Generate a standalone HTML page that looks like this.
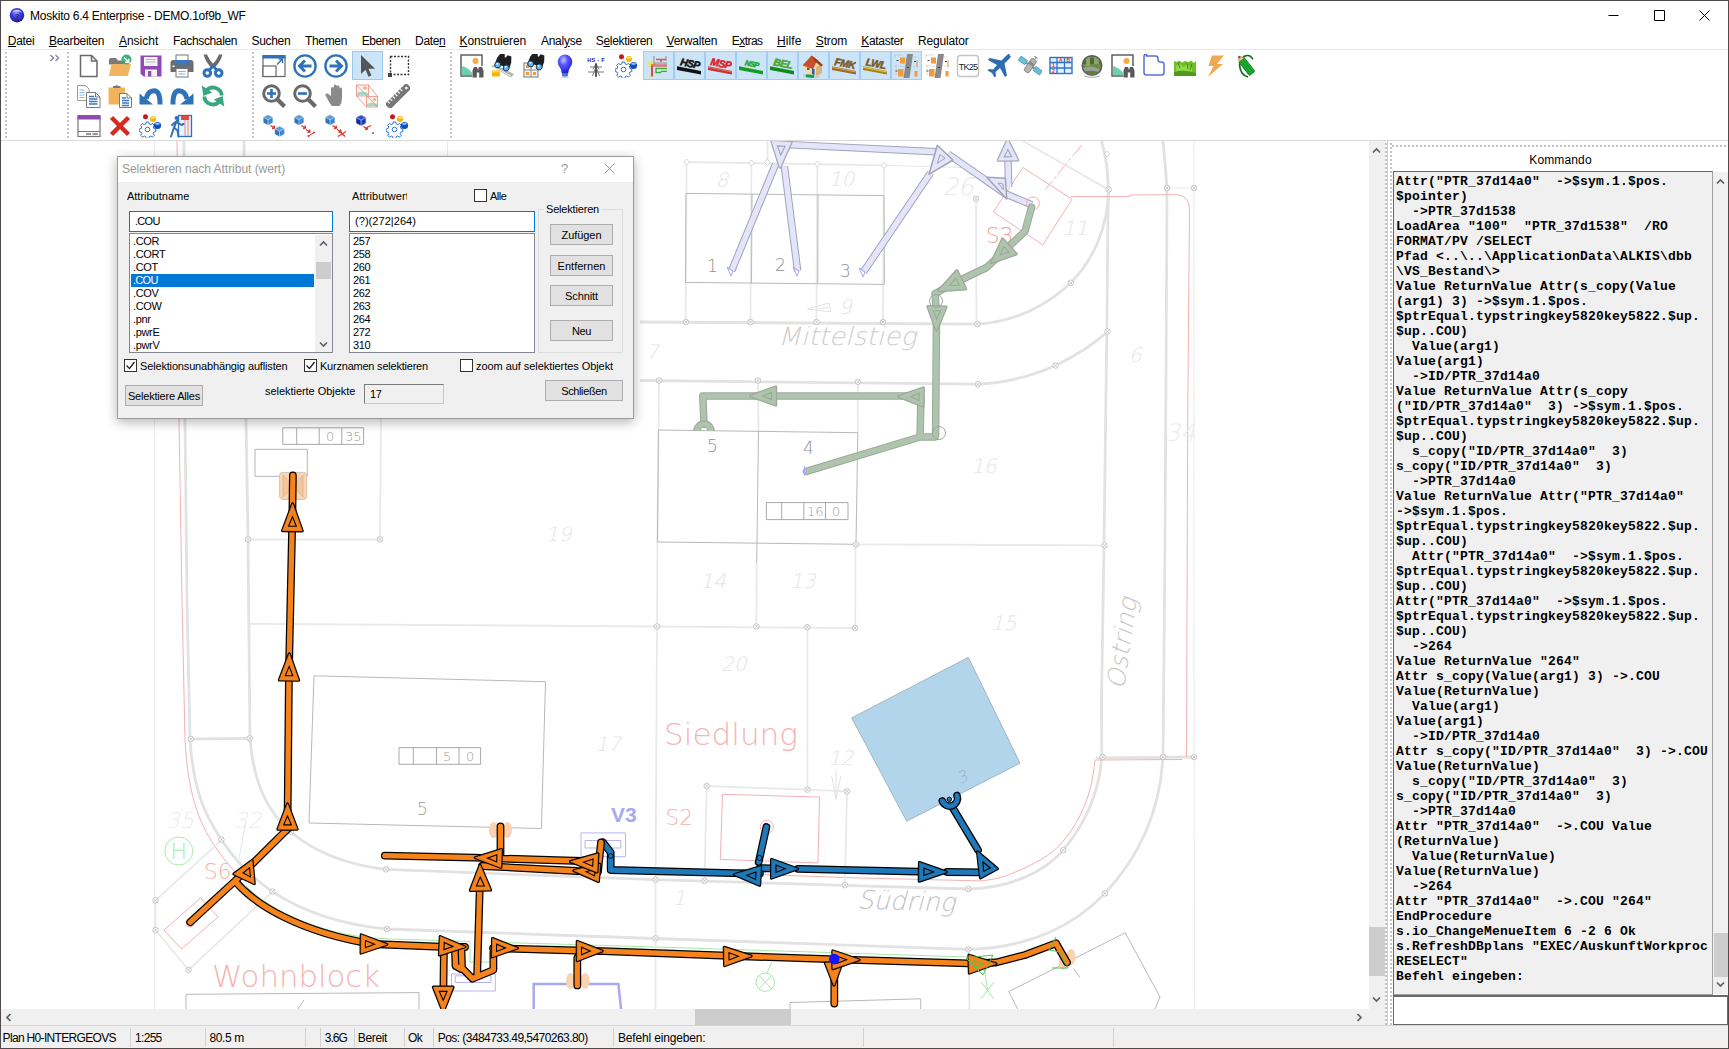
<!DOCTYPE html>
<html lang="de">
<head>
<meta charset="utf-8">
<title>Moskito 6.4 Enterprise - DEMO.1of9b_WF</title>
<style>
*{box-sizing:border-box;margin:0;padding:0}
html,body{width:1729px;height:1049px;overflow:hidden;background:#fff}
body{font-family:"Liberation Sans",sans-serif;font-size:12px;color:#000;position:relative}
.abs{position:absolute}
#frame{position:absolute;left:0;top:0;width:1729px;height:1049px;border:1px solid #504a4a;pointer-events:none;z-index:50}
#title{position:absolute;left:30px;top:9px;font-size:12px;line-height:14px;white-space:nowrap;letter-spacing:-0.24px}
#menubar{position:absolute;left:0;top:31px;width:1729px;height:20px;background:#fff}
#menubar span{position:absolute;top:3px;line-height:14px;font-size:12px;white-space:nowrap}
#menubar u{text-decoration:underline;text-underline-offset:1px}
#tbline{position:absolute;left:0;top:49px;width:1729px;height:1px;background:#e8e8e8}
#tbline2{position:absolute;left:0;top:140px;width:1729px;height:1px;background:#d9d9d9}
.grip{position:absolute;width:2px;top:52px;height:86px;background:repeating-linear-gradient(to bottom,#c6c6c6 0 2px,transparent 2px 4px)}
#map{position:absolute;left:1px;top:141px;width:1368px;height:868px;background:#fff;overflow:hidden}
#vscroll{position:absolute;left:1369px;top:141px;width:16px;height:868px;background:#f0f0f0}
#hscroll{position:absolute;left:1px;top:1009px;width:1368px;height:17px;background:#f0f0f0}
#corner{position:absolute;left:1369px;top:1009px;width:16px;height:17px;background:#f0f0f0}
.thumb{position:absolute;background:#cdcdcd}
#status{position:absolute;left:1px;top:1025px;width:1727px;height:23px;background:#f0f0f0;border-top:1px solid #d7d7d7}
#status span{position:absolute;top:5px;line-height:14px;white-space:nowrap;font-size:12px}
#status i{position:absolute;top:2px;width:1px;height:19px;background:#d2d2d2}
#cmd{position:absolute;left:1385px;top:141px;width:343px;height:884px;background:#fff}
#cmdtitle{position:absolute;left:1393px;top:153px;width:335px;text-align:center;font-size:12px;line-height:14px;letter-spacing:0.13px}
#cmdbox{position:absolute;left:1393px;top:171px;width:320px;height:824px;background:#f0f0f0;border:1px solid #696969;border-right-color:#a0a0a0;border-bottom-color:#a0a0a0;overflow:hidden}
#cmdbox pre{position:absolute;left:2px;top:2px;font-family:"Liberation Mono",monospace;font-weight:bold;font-size:13px;line-height:15px;letter-spacing:0.2px;color:#000;white-space:pre}
#cmdscroll{position:absolute;left:1713px;top:172px;width:15px;height:822px;background:#f0f0f0}
#cmdin{position:absolute;left:1393px;top:995px;width:335px;height:30px;background:#fff;border:1px solid #696969;border-top:2px solid #696969}

#dlg{position:absolute;left:117px;top:156px;width:517px;height:263px;background:#f0f0f0;border:1px solid #9b9b9b;box-shadow:0 3px 11px 0 rgba(0,0,0,.30);font-family:"Liberation Sans",sans-serif;font-size:11px;z-index:20}
#dlg .tb{position:absolute;left:0;top:0;width:515px;height:25px;background:#fff}
#dlg .tt{position:absolute;left:4px;top:5px;font-size:12px;line-height:14px;color:#999;white-space:nowrap}
#dlg .l{position:absolute;line-height:13px;white-space:nowrap;font-size:11px;letter-spacing:-.22px}
#dlg .in{position:absolute;background:#fff;border:1px solid #0078d7;height:21px}
#dlg .in span{position:absolute;left:5px;top:3px;line-height:13px}
#dlg .lb{position:absolute;background:#fff;border:1px solid #828790;overflow:hidden}
#dlg .lb div{position:absolute;left:3px;line-height:13px;height:13px;white-space:nowrap;letter-spacing:-.35px}
#dlg .btn{position:absolute;background:#e1e1e1;border:1px solid #adadad;text-align:center;line-height:20px;letter-spacing:-.3px;font-size:11px;white-space:nowrap}
#dlg .cb{position:absolute;width:13px;height:13px;background:#fff;border:1px solid #333}
#dlg .grp{position:absolute;border:1px solid #dcdcdc}
</style>
</head>
<body>
<svg class="abs" style="left:9px;top:7px" width="16" height="16" viewBox="0 0 16 16"><defs><radialGradient id="app" cx=".45" cy=".35" r=".7"><stop offset="0" stop-color="#9a9aff"/><stop offset=".45" stop-color="#3c3ce0"/><stop offset="1" stop-color="#121290"/></radialGradient></defs><circle cx="8" cy="8.200" r="7.200" fill="url(#app)"/><path d="M2.500 5.500q5.500-5.500 11 0q-5.500-2.200-11 0z" fill="#e4e4ff" opacity=".85"/><text x="8" y="11.500" font-family="Liberation Sans,sans-serif" font-size="7.500" font-weight="bold" fill="#1c1c60" text-anchor="middle">?</text></svg>
<svg class="abs" style="left:1601px;top:1px" width="127" height="30" viewBox="0 0 127 30"><path d="M7.500 14.500h10M53.500 9.500h10v10h-10zM98.500 9.500l10 10M108.500 9.500l-10 10" fill="none" stroke="#000" stroke-width="1"/></svg>
<div id="title">Moskito 6.4 Enterprise - DEMO.1of9b_WF</div>
<div id="menubar">
<span style="left:7.8px;letter-spacing:-0.32px"><u>D</u>atei</span>
<span style="left:48.9px;letter-spacing:-0.27px"><u>B</u>earbeiten</span>
<span style="left:118.9px;letter-spacing:0.01px"><u>A</u>nsicht</span>
<span style="left:173.0px;letter-spacing:-0.36px">Fachschalen</span>
<span style="left:251.5px;letter-spacing:-0.33px">Suchen</span>
<span style="left:304.9px;letter-spacing:-0.31px">Themen</span>
<span style="left:361.8px;letter-spacing:-0.51px">Ebenen</span>
<span style="left:415.1px;letter-spacing:-0.35px">Date<u>n</u></span>
<span style="left:459.6px;letter-spacing:-0.13px"><u>K</u>onstruieren</span>
<span style="left:540.9px;letter-spacing:-0.24px">Anal<u>y</u>se</span>
<span style="left:595.7px;letter-spacing:-0.30px">S<u>e</u>lektieren</span>
<span style="left:666.5px;letter-spacing:-0.23px"><u>V</u>erwalten</span>
<span style="left:731.8px;letter-spacing:-0.55px">E<u>x</u>tras</span>
<span style="left:776.9px;letter-spacing:0.10px"><u>H</u>ilfe</span>
<span style="left:815.8px;letter-spacing:-0.14px"><u>S</u>trom</span>
<span style="left:861.2px;letter-spacing:-0.30px"><u>K</u>ataster</span>
<span style="left:917.9px;letter-spacing:-0.16px">Regulator</span>
</div>
<div id="tbline"></div>
<div id="tbline2"></div>
<div class="grip" style="left:5px"></div>
<div class="grip" style="left:67px"></div>
<div class="grip" style="left:252px"></div>
<div class="grip" style="left:450px"></div>
<!--TB_BEGIN-->
<svg class="abs" style="left:49px;top:53px" width="12" height="10" viewBox="0 0 12 10"><path d="M1.5 2l3 3-3 3M6.5 2l3 3-3 3" fill="none" stroke="#7a7aa8" stroke-width="1.2"/></svg>
<svg class="abs" style="left:77px;top:54px" width="24" height="24" viewBox="0 0 24 24"><path d="M3.500 1.500h11l5.500 5.500v15.500h-16.500z" fill="#fff" stroke="#6a6a6a" stroke-width="1.500"/><path d="M14.500 1.500v5.500h5.500" fill="none" stroke="#6a6a6a" stroke-width="1.500"/></svg>
<svg class="abs" style="left:108px;top:54px" width="24" height="24" viewBox="0 0 24 24"><path d="M1 6q0-2 2-2h5l2 2.5h7v4H1z" fill="#7a7a7a"/><path d="M3.5 10h19.5l-3.2 12H1z" fill="#f0b35e"/><circle cx="18.5" cy="5.5" r="5" fill="#3db07c"/><path d="M16 3.5l4.5 4.5M20.7 4.8v3.4h-3.4" stroke="#fff" stroke-width="1.5" fill="none"/></svg>
<svg class="abs" style="left:139px;top:54px" width="24" height="24" viewBox="0 0 24 24"><path d="M1.500 1.500h21v21h-18l-3-3z" fill="#8f4bb3"/><rect x="5" y="3" width="13.5" height="9" fill="#f3f3f3"/><path d="M7 5.5h9.5M7 8h9.5" stroke="#b9b9b9" stroke-width="1.2"/><rect x="6" y="15.5" width="12" height="7" fill="#f3f3f3"/><rect x="9" y="17" width="3.3" height="5.5" fill="#8f4bb3"/></svg>
<svg class="abs" style="left:170px;top:54px" width="24" height="24" viewBox="0 0 24 24"><rect x="6" y="1" width="12" height="6" fill="#fff" stroke="#777" stroke-width="1"/><path d="M0.5 9q0-3 3-3h17q3 0 3 3v9h-23z" fill="#6d6d6d"/><path d="M4.5 6h15v4.5h-15z" fill="#3b78bd"/><rect x="2.5" y="11.5" width="2" height="1.6" fill="#fff"/><rect x="6" y="14.5" width="12" height="8.5" fill="#fff" stroke="#777" stroke-width="1"/><path d="M8.5 17.5h7M8.5 20h7" stroke="#7fb0e0" stroke-width="1.2"/></svg>
<svg class="abs" style="left:201px;top:54px" width="24" height="24" viewBox="0 0 24 24"><path d="M2.500 0.500q2.500 8.500 8.300 13.500l2.700-2.600q-5-4.500-7.500-10.900z" fill="#6b6b6b"/><path d="M21.500 0.500q-2.500 8.500-8.300 13.500l-2.700-2.600q5-4.500 7.500-10.900z" fill="#6b6b6b"/><circle cx="6.300" cy="19" r="3.300" fill="none" stroke="#2f72b8" stroke-width="3"/><circle cx="17.700" cy="19" r="3.300" fill="none" stroke="#2f72b8" stroke-width="3"/><path d="M8 16.300l4-4.300 4 4.300" fill="none" stroke="#2f72b8" stroke-width="2.800"/></svg>
<svg class="abs" style="left:77px;top:84px" width="24" height="24" viewBox="0 0 24 24"><path d="M0.500 1.500h8l3.500 3.500v11.500h-11.500z" fill="#fff" stroke="#9a9a9a" stroke-width="1"/><path d="M2.500 6h5M2.500 8.500h5M2.500 11h5M2.500 13.500h5" stroke="#8db4dd" stroke-width="1.100"/><path d="M9.500 8.500h9l4.500 4.500v10.500h-13.500z" fill="#fff" stroke="#7a7a7a" stroke-width="1"/><path d="M18.500 8.500v4.500h4.500" fill="none" stroke="#7a7a7a"/><path d="M12 12.500h5M12 15h8.500M12 17.500h8.500M12 20h8.500" stroke="#3b78bd" stroke-width="1.300"/></svg>
<svg class="abs" style="left:108px;top:84px" width="24" height="24" viewBox="0 0 24 24"><path d="M0.500 3.500h16.500v17h-16.500z" fill="#f0b35e"/><path d="M5 4v-2h2.500q1.200-2 2.500 0h2.500v2z" fill="#777"/><path d="M11.500 9.500h7.500l4.500 4.500v9.500h-12z" fill="#fff" stroke="#7a7a7a" stroke-width="1"/><path d="M19 9.500v4.500h4.500" fill="none" stroke="#7a7a7a"/><path d="M14 14h4M14 16.500h7M14 19h7M14 21.500h7" stroke="#3b78bd" stroke-width="1.300"/></svg>
<svg class="abs" style="left:139px;top:84px" width="24" height="24" viewBox="0 0 24 24"><path d="M0.500 9.500v11h13.500z" fill="#2f72b8"/><path d="M7 15q2-8.300 8-8.300q6.300 0 6 13.800" fill="none" stroke="#2f72b8" stroke-width="5"/></svg>
<svg class="abs" style="left:170px;top:84px" width="24" height="24" viewBox="0 0 24 24"><path d="M23.500 9.500v11h-13.500z" fill="#2f72b8"/><path d="M17 15q-2-8.300-8-8.300q-6.300 0-6 13.800" fill="none" stroke="#2f72b8" stroke-width="5"/></svg>
<svg class="abs" style="left:201px;top:84px" width="24" height="24" viewBox="0 0 24 24"><path d="M20.800 11.500a8.800 8.800 0 0 0-15.300-5" fill="none" stroke="#3aa681" stroke-width="3.800"/><path d="M0.800 1.500l1.500 10.500 9-3.500z" fill="#3aa681"/><path d="M3.200 12.500a8.800 8.800 0 0 0 15.300 5" fill="none" stroke="#3aa681" stroke-width="3.800"/><path d="M23.200 22.500l-1.500-10.500-9 3.500z" fill="#3aa681"/></svg>
<svg class="abs" style="left:77px;top:114px" width="24" height="24" viewBox="0 0 24 24"><rect x="1" y="2.500" width="22" height="20" fill="#fff" stroke="#777" stroke-width="1.200"/><rect x="0.500" y="1" width="23" height="4.500" fill="#8f4bb3"/><path d="M1 17.500h22" stroke="#777" stroke-width="1"/><rect x="9" y="19" width="5" height="2" fill="#999"/><rect x="15.500" y="19" width="5.500" height="2" fill="#999"/></svg>
<svg class="abs" style="left:108px;top:114px" width="24" height="24" viewBox="0 0 24 24"><path d="M3.500 3.500l17 17M20.500 3.500l-17 17" stroke="#d52b1e" stroke-width="4.500"/></svg>
<svg class="abs" style="left:139px;top:114px" width="24" height="24" viewBox="0 0 24 24"><g transform="translate(8.5 15.5)"><path d="M-1.300-7.500h2.600l.4 1.900 1.600.7 1.700-1.100 1.800 1.800-1.100 1.700.7 1.600 1.900.4v2.600l-1.900.4-.7 1.600 1.100 1.700-1.800 1.800-1.700-1.100-1.600.7-.4 1.900h-2.600l-.4-1.900-1.600-.7-1.700 1.100-1.800-1.800 1.100-1.700-.7-1.600-1.900-.4v-2.600l1.900-.4.7-1.600-1.100-1.700 1.800-1.800 1.700 1.100 1.600-.7z" fill="#fff" stroke="#2f72c8" stroke-width="1"/><circle r="2.300" fill="#fff" stroke="#2f72c8" stroke-width="1"/></g><circle cx="6.500" cy="2.800" r="2.500" fill="#c8161d"/><circle cx="14" cy="5" r="3" fill="#f5b400"/><ellipse cx="14" cy="3.800" rx="2" ry="1" fill="#fde9a0"/><circle cx="18.500" cy="11.500" r="3.600" fill="#0b4fc0"/><ellipse cx="18.500" cy="9.800" rx="2.400" ry="1.100" fill="#9cc0f5"/></svg>
<svg class="abs" style="left:170px;top:114px" width="24" height="24" viewBox="0 0 24 24"><rect x="8.500" y="1.500" width="13" height="21" fill="#eaf2fb" stroke="#2f72b8" stroke-width="1.300"/><rect x="11" y="2" width="8" height="4" fill="#e04a3f"/><path d="M15 6v16M18 6v16" stroke="#e58a84" stroke-width="1"/><circle cx="6.500" cy="4" r="2" fill="#2f72b8"/><path d="M7 6.500l-3 7 3.500 3 1 6M4 13.500l-3 9M6.500 8l5 3 2-1M5.500 8l-3.500 3" stroke="#2f72b8" stroke-width="2" fill="none" stroke-linecap="round" stroke-linejoin="round"/></svg>
<svg class="abs" style="left:262px;top:54px" width="24" height="24" viewBox="0 0 24 24"><rect x="1" y="2" width="22" height="20.500" fill="#fff" stroke="#666" stroke-width="1.200"/><rect x="0.500" y="1" width="23" height="3.500" fill="#2f72b8"/><rect x="1" y="12" width="13" height="10.500" fill="#fff" stroke="#666" stroke-width="1.200"/><path d="M15 10.500l5.500-5.500M16.500 5h4v4" stroke="#2f72b8" stroke-width="1.400" fill="none"/></svg>
<svg class="abs" style="left:293px;top:54px" width="24" height="24" viewBox="0 0 24 24"><circle cx="12" cy="12" r="10.600" fill="#fff" stroke="#2f72b8" stroke-width="2.400"/><path d="M18.500 12h-11M12 6.500l-5.500 5.500 5.500 5.500" stroke="#2f72b8" stroke-width="3" fill="none"/></svg>
<svg class="abs" style="left:324px;top:54px" width="24" height="24" viewBox="0 0 24 24"><circle cx="12" cy="12" r="10.600" fill="#fff" stroke="#2f72b8" stroke-width="2.400"/><path d="M5.500 12h11M12 6.500l5.500 5.500-5.500 5.500" stroke="#2f72b8" stroke-width="3" fill="none"/></svg>
<div class="abs" style="left:352px;top:51px;width:31px;height:29px;background:#cce4f7;border:1px solid #99c9ef"></div>
<svg class="abs" style="left:355px;top:54px" width="24" height="24" viewBox="0 0 24 24"><path d="M6 1v19l4.500-4.300 3 7 3-1.300-3-6.700h6.500z" fill="#555"/></svg>
<svg class="abs" style="left:386px;top:54px" width="24" height="24" viewBox="0 0 24 24"><rect x="4.500" y="2.500" width="18" height="18" fill="none" stroke="#333" stroke-width="1.400" stroke-dasharray="2 1.500"/><rect x="2" y="19" width="4" height="4" fill="#444"/></svg>
<svg class="abs" style="left:262px;top:84px" width="24" height="24" viewBox="0 0 24 24"><circle cx="9.500" cy="9.500" r="7.800" fill="#fff" stroke="#6a6a6a" stroke-width="3"/><path d="M15.500 15.500l7 7" stroke="#6a6a6a" stroke-width="4.200"/><path d="M5 9.500h9M9.500 5v9" stroke="#2f72b8" stroke-width="2.600"/></svg>
<svg class="abs" style="left:293px;top:84px" width="24" height="24" viewBox="0 0 24 24"><circle cx="9.500" cy="9.500" r="7.800" fill="#fff" stroke="#6a6a6a" stroke-width="3"/><path d="M15.500 15.500l7 7" stroke="#6a6a6a" stroke-width="4.200"/><path d="M5 9.500h9" stroke="#2f72b8" stroke-width="2.600"/></svg>
<svg class="abs" style="left:324px;top:84px" width="24" height="24" viewBox="0 0 24 24"><path d="M7 12v-7.500q0-1.500 1.400-1.500t1.400 1.500v-2.500q0-1.500 1.400-1.500t1.400 1.500v.8q0-1.500 1.400-1.500t1.400 1.500v2q0-1.400 1.300-1.400t1.300 1.400v9.700q0 4.500-2.500 7.500h-7.500q-2-2-4-6l-2.500-4.500q-.5-1.500 1-2t2.500 1z" fill="#8a8a8a"/></svg>
<svg class="abs" style="left:355px;top:84px" width="24" height="24" viewBox="0 0 24 24"><rect x="1.500" y="1" width="12" height="11" fill="#fdf1ee" stroke="#e9a39b" stroke-width="1"/><circle cx="10" cy="4" r="1.800" fill="#f3b27a"/><path d="M2 9q5-3 11 0v2.500h-11z" fill="#a9d9c2"/><rect x="11.500" y="12.500" width="11" height="10.500" fill="#fdf1ee" stroke="#e9a39b" stroke-width="1"/><circle cx="19.500" cy="15.500" r="1.600" fill="#f3b27a"/><path d="M12 20q5-3 10 0v2.500h-10z" fill="#a9d9c2"/><path d="M1.500 1l21 22M13.500 1l9 11.500M1.500 12l10 11" stroke="#e58d83" stroke-width=".8" fill="none"/></svg>
<svg class="abs" style="left:386px;top:84px" width="24" height="24" viewBox="0 0 24 24"><g transform="rotate(-45 12 12)"><rect x="-3" y="8.500" width="30" height="7.500" rx="1.500" fill="#777"/><path d="M1 8.500v3M4.500 8.500v3M8 8.500v3M11.500 8.500v3M15 8.500v3M18.500 8.500v3" stroke="#fff" stroke-width="1.200"/><circle cx="23.500" cy="12.200" r="1.300" fill="#fff"/></g></svg>
<svg class="abs" style="left:262px;top:114px" width="24" height="24" viewBox="0 0 24 24"><g transform="translate(6 6) scale(1.05)"><path d="M0-5l4.600 2.300v5.200l-4.600 2.500-4.600-2.500v-5.200z" fill="#2f72b8"/><path d="M0-5l4.600 2.300-4.600 2.400-4.600-2.400z" fill="#5a9bd8"/><path d="M0-.3v5.300l4.600-2.500v-5.200z" fill="#3f86cc"/><path d="M0-5l4.600 2.300v5.200l-4.600 2.500-4.600-2.500v-5.200zM-4.600-2.700l4.600 2.400 4.600-2.400M0-.3v5.300" fill="none" stroke="#fff" stroke-width=".5"/></g><g transform="translate(17.5 17.5) scale(1.05)"><path d="M0-5l4.600 2.300v5.200l-4.600 2.500-4.600-2.500v-5.200z" fill="#2f72b8"/><path d="M0-5l4.600 2.300-4.600 2.400-4.600-2.400z" fill="#5a9bd8"/><path d="M0-.3v5.300l4.600-2.500v-5.200z" fill="#3f86cc"/><path d="M0-5l4.600 2.300v5.200l-4.600 2.500-4.600-2.500v-5.200zM-4.600-2.700l4.600 2.400 4.600-2.400M0-.3v5.300" fill="none" stroke="#fff" stroke-width=".5"/></g><path d="M8.500 11.500l4 2.500M10 14.500l2.500-.5-.3-2.500" stroke="#d9362b" stroke-width="1.300" fill="none"/></svg>
<svg class="abs" style="left:293px;top:114px" width="24" height="24" viewBox="0 0 24 24"><g transform="translate(6 6) scale(1.05)"><path d="M0-5l4.600 2.300v5.200l-4.600 2.500-4.600-2.500v-5.200z" fill="#2f72b8"/><path d="M0-5l4.600 2.300-4.600 2.400-4.600-2.400z" fill="#5a9bd8"/><path d="M0-.3v5.300l4.600-2.500v-5.200z" fill="#3f86cc"/><path d="M0-5l4.600 2.300v5.200l-4.600 2.500-4.600-2.500v-5.200zM-4.600-2.700l4.600 2.400 4.600-2.400M0-.3v5.300" fill="none" stroke="#fff" stroke-width=".5"/></g><path d="M8.500 11.500l4 2.500M10 14.500l2.500-.5-.3-2.500M13 15.500l4 2.500M14.500 18.500l2.500-.5-.3-2.500" stroke="#d9362b" stroke-width="1.300" fill="none"/><path d="M15.500 22l5.500-3.500" stroke="#d9362b" stroke-width="1"/><circle cx="15.500" cy="22" r="1" fill="#d9362b"/><circle cx="21" cy="18.500" r="1" fill="#d9362b"/></svg>
<svg class="abs" style="left:324px;top:114px" width="24" height="24" viewBox="0 0 24 24"><g transform="translate(6 6) scale(1.05)"><path d="M0-5l4.600 2.300v5.200l-4.600 2.500-4.600-2.500v-5.200z" fill="#2f72b8"/><path d="M0-5l4.600 2.300-4.600 2.400-4.600-2.400z" fill="#5a9bd8"/><path d="M0-.3v5.300l4.600-2.500v-5.200z" fill="#3f86cc"/><path d="M0-5l4.600 2.300v5.200l-4.600 2.500-4.600-2.500v-5.200zM-4.600-2.700l4.600 2.400 4.600-2.400M0-.3v5.300" fill="none" stroke="#fff" stroke-width=".5"/></g><path d="M8.500 11.500l4 2.500M10 14.500l2.500-.5-.3-2.500M13 15.500l4 2.500M14.500 18.500l2.500-.5-.3-2.500" stroke="#d9362b" stroke-width="1.300" fill="none"/><path d="M14 22.500l8-5M16 17.500l5 5" stroke="#d9362b" stroke-width="1.200"/></svg>
<svg class="abs" style="left:355px;top:114px" width="24" height="24" viewBox="0 0 24 24"><g transform="translate(6 6.5) scale(1.1)"><path d="M0-5l4.600 2.300v5.200l-4.600 2.500-4.600-2.500v-5.200z" fill="#0d2a9c"/><path d="M0-5l4.600 2.300-4.600 2.400-4.600-2.400z" fill="#2a4fd0"/><path d="M0-.3v5.300l4.600-2.500v-5.200z" fill="#1a3cc0"/><path d="M0-5l4.600 2.300v5.200l-4.600 2.500-4.600-2.500v-5.200zM-4.600-2.700l4.600 2.400 4.600-2.400M0-.3v5.300" fill="none" stroke="#fff" stroke-width=".5"/></g><path d="M8.500 12.500l4 2.500M10 15.500l2.500-.5-.3-2.500M13 13l3-1.500" stroke="#d9362b" stroke-width="1.300" fill="none"/><circle cx="18" cy="19" r=".9" fill="#555"/></svg>
<svg class="abs" style="left:386px;top:114px" width="24" height="24" viewBox="0 0 24 24"><g transform="translate(8.5 15.5)"><path d="M-1.300-7.500h2.600l.4 1.900 1.600.7 1.700-1.100 1.800 1.800-1.100 1.700.7 1.600 1.900.4v2.600l-1.900.4-.7 1.600 1.100 1.700-1.800 1.800-1.700-1.100-1.600.7-.4 1.900h-2.600l-.4-1.900-1.600-.7-1.700 1.100-1.800-1.800 1.100-1.700-.7-1.600-1.900-.4v-2.600l1.900-.4.7-1.600-1.100-1.700 1.800-1.800 1.700 1.100 1.600-.7z" fill="#fff" stroke="#2f72c8" stroke-width="1"/><circle r="2.300" fill="#fff" stroke="#2f72c8" stroke-width="1"/></g><circle cx="6.500" cy="2.800" r="2.500" fill="#c8161d"/><circle cx="14" cy="5" r="3" fill="#f5b400"/><ellipse cx="14" cy="3.800" rx="2" ry="1" fill="#fde9a0"/><circle cx="18.500" cy="11.500" r="3.600" fill="#0b4fc0"/><ellipse cx="18.500" cy="9.800" rx="2.400" ry="1.100" fill="#9cc0f5"/></svg>
<div class="abs" style="left:643px;top:51px;width:31px;height:29px;background:#cce4f7;border:1px solid #a3cdf0"></div>
<div class="abs" style="left:674px;top:51px;width:31px;height:29px;background:#cce4f7;border:1px solid #a3cdf0"></div>
<div class="abs" style="left:705px;top:51px;width:31px;height:29px;background:#cce4f7;border:1px solid #a3cdf0"></div>
<div class="abs" style="left:736px;top:51px;width:31px;height:29px;background:#cce4f7;border:1px solid #a3cdf0"></div>
<div class="abs" style="left:767px;top:51px;width:31px;height:29px;background:#cce4f7;border:1px solid #a3cdf0"></div>
<div class="abs" style="left:798px;top:51px;width:31px;height:29px;background:#cce4f7;border:1px solid #a3cdf0"></div>
<div class="abs" style="left:829px;top:51px;width:31px;height:29px;background:#cce4f7;border:1px solid #a3cdf0"></div>
<div class="abs" style="left:860px;top:51px;width:31px;height:29px;background:#cce4f7;border:1px solid #a3cdf0"></div>
<div class="abs" style="left:891px;top:51px;width:31px;height:29px;background:#cce4f7;border:1px solid #a3cdf0"></div>
<svg class="abs" style="left:460px;top:54px" width="24" height="24" viewBox="0 0 24 24"><rect x="1" y="1" width="21" height="21" fill="#fff" stroke="#555" stroke-width="1.400"/><circle cx="15.500" cy="7" r="3" fill="#f6ad3c"/><path d="M2 12q6 1 12 9h-12z" fill="#6fd0b0"/><rect x="12" y="12" width="12" height="12" fill="#fff"/><g transform="translate(12.5 13)"><path d="M0 3.500l1.500-3.500h3l.8 2.500h.4l.8-2.500h3l1.500 3.500v7h-4.300v-5h-2.400v5h-4.300z" fill="#5a5a5a"/></g></svg>
<svg class="abs" style="left:491px;top:54px" width="24" height="24" viewBox="0 0 24 24"><path d="M0 12l4-1.500 19 9.500-3 3.500z" fill="#b5b5b5"/><path d="M3 13l17 9" stroke="#e6e6e6" stroke-width="1"/><path d="M1 16.500h8v6h-8z" fill="#f9b300"/><path d="M1 16.500h8v2h-8z" fill="#ffd54a"/><g transform="translate(12 8) rotate(20)"><path d="M-7-2l2-6h4l1 3h1l1-3h4l2 6v6h-15z" fill="#1f1f1f"/><circle cx="-4" cy="4.500" r="3" fill="#57b7ee" stroke="#123" stroke-width=".8"/><circle cx="5" cy="4.500" r="3" fill="#57b7ee" stroke="#123" stroke-width=".8"/><circle cx="-4.800" cy="3.700" r="1" fill="#d6f0ff"/><circle cx="4.200" cy="3.700" r="1" fill="#d6f0ff"/></g></svg>
<svg class="abs" style="left:522px;top:54px" width="24" height="24" viewBox="0 0 24 24"><rect x="2" y="9" width="14" height="14" fill="#f4f4f4" stroke="#8a8a8a" stroke-width="1.200"/><path d="M9 9v14M2 16h14" stroke="#8a8a8a" stroke-width="1"/><rect x="4" y="11" width="3" height="3" fill="#f59a3c"/><rect x="4" y="18" width="3" height="3" fill="#f59a3c"/><rect x="11" y="18" width="3" height="3" fill="#f59a3c"/><g transform="translate(14 7) rotate(20)"><path d="M-7-2l2-6h4l1 3h1l1-3h4l2 6v6h-15z" fill="#1f1f1f"/><circle cx="-4" cy="4.500" r="3" fill="#57b7ee" stroke="#123" stroke-width=".8"/><circle cx="5" cy="4.500" r="3" fill="#57b7ee" stroke="#123" stroke-width=".8"/><circle cx="-4.800" cy="3.700" r="1" fill="#d6f0ff"/><circle cx="4.200" cy="3.700" r="1" fill="#d6f0ff"/></g></svg>
<svg class="abs" style="left:553px;top:54px" width="24" height="24" viewBox="0 0 24 24"><defs><radialGradient id="bulb" cx=".4" cy=".3" r=".8"><stop offset="0" stop-color="#c8c8ff"/><stop offset=".35" stop-color="#5858ff"/><stop offset="1" stop-color="#1212c8"/></radialGradient></defs><path d="M12 0.500a7.300 7.300 0 0 1 7.300 7.300q0 3-2.500 6.200-1.300 2-1.500 5h-6.600q-.2-3-1.500-5-2.500-3.200-2.500-6.200a7.300 7.300 0 0 1 7.300-7.300z" fill="url(#bulb)"/><path d="M9 19h6v2.500q-3 3-6 0z" fill="#3a7be0"/><ellipse cx="12" cy="23" rx="4" ry=".8" fill="#bbb"/></svg>
<svg class="abs" style="left:584px;top:54px" width="24" height="24" viewBox="0 0 24 24"><text x="12" y="7.500" font-family="Liberation Sans,sans-serif" font-weight="bold" font-size="5.500" fill="#1a1ab0" text-anchor="middle" letter-spacing=".3">HS - F</text><path d="M12 9.500v13.500M6 13h12M4 18h16M9 15.500l3-6 3 6M8.500 22l3.500-9 3.500 9" stroke="#7a7a7a" stroke-width="1" fill="none"/><path d="M12 9.500v13.500" stroke="#444" stroke-width="1.600"/></svg>
<svg class="abs" style="left:615px;top:54px" width="24" height="24" viewBox="0 0 24 24"><g transform="translate(8.5 15.5)"><path d="M-1.300-7.500h2.600l.4 1.900 1.600.7 1.700-1.100 1.800 1.800-1.100 1.700.7 1.600 1.900.4v2.600l-1.900.4-.7 1.600 1.100 1.700-1.800 1.800-1.700-1.100-1.600.7-.4 1.900h-2.600l-.4-1.900-1.600-.7-1.700 1.100-1.800-1.800 1.100-1.700-.7-1.600-1.900-.4v-2.600l1.900-.4.7-1.600-1.100-1.700 1.800-1.800 1.700 1.100 1.600-.7z" fill="#fff" stroke="#2f72c8" stroke-width="1"/><circle r="2.300" fill="#fff" stroke="#2f72c8" stroke-width="1"/></g><circle cx="6.500" cy="2.800" r="2.500" fill="#c8161d"/><circle cx="14" cy="5" r="3" fill="#f5b400"/><ellipse cx="14" cy="3.800" rx="2" ry="1" fill="#fde9a0"/><circle cx="18.500" cy="11.500" r="3.600" fill="#0b4fc0"/><ellipse cx="18.500" cy="9.800" rx="2.400" ry="1.100" fill="#9cc0f5"/></svg>
<svg class="abs" style="left:646px;top:54px" width="24" height="24" viewBox="0 0 24 24"><path d="M5 6l1.200 2.600 2.800.3-2 2 .5 2.800-2.500-1.400-2.500 1.400.5-2.800-2-2 2.800-.3z" fill="#f2e83a"/><path d="M8 2v9M20 2v5M8 9h13" stroke="#8a8a8a" stroke-width="1" fill="none"/><path d="M10 5.500h10M15 5.500v2.500" stroke="#e2504a" stroke-width="1.600" fill="none"/><path d="M21 11.500h-15v11" stroke="#d93a34" stroke-width="1.800" fill="none"/><path d="M5.500 11.500h15.500" stroke="#a89b6a" stroke-width="1"/><path d="M21 14.500h-11v4h4.500l1-1.200h5.500" stroke="#3cae3c" stroke-width="1.300" fill="#d6f0d0"/><circle cx="4" cy="22" r="1.300" fill="#f2e83a"/></svg>
<svg class="abs" style="left:677px;top:54px" width="24" height="24" viewBox="0 0 24 24"><g transform="rotate(11 12 12)"><text x="12.500" y="13" font-family="Liberation Sans,sans-serif" font-weight="bold" font-style="italic" font-size="10.3" fill="#111" stroke="#111" stroke-width=".5" text-anchor="middle" letter-spacing="-.5">HSP</text><path d="M0 14.500h25l.5 3.600h-25z" fill="#111"/></g></svg>
<svg class="abs" style="left:708px;top:54px" width="24" height="24" viewBox="0 0 24 24"><g transform="rotate(11 12 12)"><text x="12.500" y="13" font-family="Liberation Sans,sans-serif" font-weight="bold" font-style="italic" font-size="10.3" fill="#e11b22" stroke="#e11b22" stroke-width=".5" text-anchor="middle" letter-spacing="-.5">MSP</text><path d="M0 14.500h25l.5 3.600h-25z" fill="#c8312f"/><path d="M0 15.500h25" stroke="#e87070" stroke-width="1"/></g></svg>
<svg class="abs" style="left:739px;top:54px" width="24" height="24" viewBox="0 0 24 24"><g transform="rotate(11 12 12)"><text x="12.500" y="12.5" font-family="Liberation Sans,sans-serif" font-weight="bold" font-style="italic" font-size="7.5" fill="#1fa82d" stroke="#1fa82d" stroke-width=".5" text-anchor="middle" letter-spacing="-.5">NSP</text><path d="M0 14.500h25l.5 3.600h-25z" fill="#179c25"/></g></svg>
<svg class="abs" style="left:770px;top:54px" width="24" height="24" viewBox="0 0 24 24"><g transform="rotate(11 12 12)"><text x="12.500" y="13" font-family="Liberation Sans,sans-serif" font-weight="bold" font-style="italic" font-size="10.3" fill="#4aa82a" stroke="#4aa82a" stroke-width=".5" text-anchor="middle" letter-spacing="-.5">BEL</text><path d="M0 14.500h25l.5 3.600h-25z" fill="#0f8a1f"/></g></svg>
<svg class="abs" style="left:801px;top:54px" width="24" height="24" viewBox="0 0 24 24"><path d="M3 12.500l8.500-9 9.500 6.500v9l-6 3.500-10-4z" fill="#f4d9a8"/><path d="M15 22.500v-9.500l6-3v9z" fill="#d8b47c"/><path d="M1.500 11.500l9-10 6 4.500-4.500 9z" fill="#c9502a"/><path d="M10.500 1.500l6 4.500 5.500 5-2 1.500-6.500-5.500z" fill="#a33a1a"/><path d="M11 14v6l2.500 1v-6z" fill="#2c5fa8"/><rect x="6" y="13.500" width="2.500" height="2.500" fill="#7a5a3a"/><path d="M2 21.500l16 1.500" stroke="#c9c9c9" stroke-width="2.500"/><path d="M5 21.800l8 .8" stroke="#14a04a" stroke-width="3"/></svg>
<svg class="abs" style="left:832px;top:54px" width="24" height="24" viewBox="0 0 24 24"><g transform="rotate(11 12 12)"><text x="12.500" y="13" font-family="Liberation Sans,sans-serif" font-weight="bold" font-style="italic" font-size="10.3" fill="#7a5a1e" stroke="#7a5a1e" stroke-width=".5" text-anchor="middle" letter-spacing="-.5">FMK</text><path d="M0 14.500h25l.5 3.600h-25z" fill="#9a6a2a"/><path d="M0 15.500h25" stroke="#d8a860" stroke-width="1"/></g></svg>
<svg class="abs" style="left:863px;top:54px" width="24" height="24" viewBox="0 0 24 24"><g transform="rotate(11 12 12)"><text x="12.500" y="13" font-family="Liberation Sans,sans-serif" font-weight="bold" font-style="italic" font-size="10.3" fill="#7a5a1e" stroke="#7a5a1e" stroke-width=".5" text-anchor="middle" letter-spacing="-.5">LWL</text><path d="M0 14.500h25l.5 3.600h-25z" fill="#a8801e"/><path d="M0 15.500h25" stroke="#f0d048" stroke-width="1"/></g></svg>
<svg class="abs" style="left:894px;top:54px" width="24" height="24" viewBox="0 0 24 24"><path d="M13 0l6 0-3.500 24h-6z" fill="#8a8a8a"/><path d="M1 1h8M1 1v3M1 11.500l9 1M20 12.500l4 .5M18 3h5M2 12v10" stroke="#b9b9b9" stroke-width=".8" stroke-dasharray="1.500 1" fill="none"/><rect x="6" y="3.500" width="5" height="6" fill="#f59a3c"/><rect x="4" y="15" width="5.500" height="7.500" fill="#f59a3c"/><rect x="20.500" y="17" width="3" height="5.500" fill="#f59a3c"/><path d="M23 6.500v6" stroke="#f59a3c" stroke-width="1.200"/><path d="M2.500 6.500h2M1.500 17h2M20 7.500h2M13 13.500h2" stroke="#444" stroke-width="1"/></svg>
<svg class="abs" style="left:925px;top:54px" width="24" height="24" viewBox="0 0 24 24"><path d="M13 0l6 0-3.500 24h-6z" fill="#8a8a8a"/><path d="M1 1h8M1 1v3M1 11.500l9 1M20 12.500l4 .5M18 3h5M2 12v10" stroke="#b9b9b9" stroke-width=".8" stroke-dasharray="1.500 1" fill="none"/><rect x="6" y="3.500" width="5" height="6" fill="#f59a3c"/><rect x="4" y="15" width="5.500" height="7.500" fill="#f59a3c"/><rect x="20.500" y="17" width="3" height="5.500" fill="#f59a3c"/><path d="M23 6.500v6" stroke="#f59a3c" stroke-width="1.200"/><path d="M2.500 6.500h2M1.500 17h2M20 7.500h2M13 13.500h2" stroke="#444" stroke-width="1"/></svg>
<svg class="abs" style="left:956px;top:54px" width="24" height="24" viewBox="0 0 24 24"><rect x="1.500" y="1.500" width="21" height="21" rx="3" fill="#fff" stroke="#c4c4c4" stroke-width="1.400"/><text x="12" y="15.500" font-family="Liberation Sans,sans-serif" font-size="9" fill="#222" text-anchor="middle" letter-spacing="-.7">TK25</text></svg>
<svg class="abs" style="left:987px;top:54px" width="24" height="24" viewBox="0 0 24 24"><path d="M22.500 1q2 1 .5 3l-5.500 5.500 2.500 12-2 1.500-5-9-4.500 4 .5 4-1.500 1.500-2.500-4.500-4.500-2.500 1.500-1.500 4 .5 4-4.500-9-5 1.500-2 12 2.500 5.500-5.500q1.500-1.500 3-.5z" fill="#2e6db4"/></svg>
<svg class="abs" style="left:1018px;top:54px" width="24" height="24" viewBox="0 0 24 24"><g transform="rotate(35 12 12)"><rect x="-1" y="9" width="8" height="5" fill="#62c0dc" stroke="#3a8aa8" stroke-width=".6"/><rect x="17" y="9" width="8" height="5" fill="#62c0dc" stroke="#3a8aa8" stroke-width=".6"/><rect x="7" y="10.500" width="10" height="2" fill="#888"/><rect x="9" y="4" width="6" height="15" rx="2" fill="#b4b4b4" stroke="#777" stroke-width=".8"/><rect x="9" y="8" width="6" height="3" fill="#8a8a8a"/><path d="M12 4v-3M10 1.500h4" stroke="#888" stroke-width="1"/></g></svg>
<svg class="abs" style="left:1049px;top:54px" width="24" height="24" viewBox="0 0 24 24"><rect x="1" y="3.500" width="22" height="16" fill="#e4f1fc" stroke="#2f72c8" stroke-width="1.400"/><path d="M1 8.500h22M1 14h22M8 3.500v16M15.500 3.500v16" stroke="#2f72c8" stroke-width="1.300"/><text x="11.700" y="8" font-family="Liberation Sans,sans-serif" font-weight="bold" font-size="5" fill="#e0352b" text-anchor="middle">A</text><text x="19.200" y="8" font-family="Liberation Sans,sans-serif" font-weight="bold" font-size="5" fill="#e0352b" text-anchor="middle">B</text><text x="4.500" y="13.300" font-family="Liberation Sans,sans-serif" font-weight="bold" font-size="5" fill="#e0352b" text-anchor="middle">1</text><text x="4.500" y="18.800" font-family="Liberation Sans,sans-serif" font-weight="bold" font-size="5" fill="#e0352b" text-anchor="middle">2</text></svg>
<svg class="abs" style="left:1080px;top:54px" width="24" height="24" viewBox="0 0 24 24"><defs><clipPath id="gl"><circle cx="12" cy="11.500" r="9"/></clipPath></defs><circle cx="12" cy="11.500" r="10.500" fill="#5a5a5a"/><g clip-path="url(#gl)"><rect x="0" y="0" width="24" height="24" fill="#6f8a4a"/><path d="M2 4h20v6h-20z" fill="#4f6b34"/><path d="M6 3h4v9h-4zM14 2h5v8h-5z" fill="#8aa66a"/><path d="M3 14q9-4 18 2v6h-18z" fill="#9a9f96"/><path d="M3 18q9-3 18 1v4h-18z" fill="#5f7f3a"/></g><path d="M4 22q8 2.500 16 0" stroke="#aaa" stroke-width="1.200" fill="none"/></svg>
<svg class="abs" style="left:1111px;top:54px" width="24" height="24" viewBox="0 0 24 24"><rect x="1" y="1" width="21" height="21" fill="#fff" stroke="#555" stroke-width="1.400"/><circle cx="15.500" cy="7" r="3" fill="#f6ad3c"/><path d="M2 12q6 1 12 9h-12z" fill="#6fd0b0"/><rect x="12" y="12" width="12" height="12" fill="#fff"/><g transform="translate(12.5 13)"><path d="M0 3.500l1.500-3.500h3l.8 2.500h.4l.8-2.500h3l1.500 3.500v7h-4.300v-5h-2.400v5h-4.300z" fill="#5a5a5a"/></g></svg>
<svg class="abs" style="left:1142px;top:54px" width="24" height="24" viewBox="0 0 24 24"><path d="M4.500 2h9q2.500 0 2.500 2.500v1q0 2.500 2.500 2.500h1q2.500 0 2.500 2.500v8q0 2.500-2.500 2.500h-15q-2.500 0-2.500-2.500v-16q0-2.500 2.500-2.500z" fill="#fff" stroke="#5a6fd8" stroke-width="1.500"/></svg>
<svg class="abs" style="left:1173px;top:54px" width="24" height="24" viewBox="0 0 24 24"><path d="M1 7l3 1 2-1.500 3 2 3-1.500 3 1 3.500-1.500 2 2.500 2.500-2v15h-22z" fill="#6fbf2a"/><path d="M3 12l4-2 3 3 4-2 5 3v7h-16z" fill="#8fd84a"/><path d="M1 18q10-3 22 1v3h-22z" fill="#4f9a1a"/><path d="M5 9l2 5M14 9l1 6M19 10l-2 6" stroke="#3f8a14" stroke-width="1"/></svg>
<svg class="abs" style="left:1204px;top:54px" width="24" height="24" viewBox="0 0 24 24"><path d="M8 1.500h12l-7 8.500h6l-15 13 5.500-11h-5z" fill="#f0a94e"/></svg>
<svg class="abs" style="left:1235px;top:54px" width="24" height="24" viewBox="0 0 24 24"><path d="M10 2q-9 6-3 17 2 3 6 4" fill="none" stroke="#0a6a1a" stroke-width="1.600"/><path d="M9 2.500q6-3 9 3" fill="none" stroke="#0a6a1a" stroke-width="1.400"/><g transform="rotate(-38 12 12)"><rect x="8" y="4" width="7" height="17" rx="1" fill="#18b030" stroke="#0a6a1a" stroke-width=".8"/><path d="M8 4l3.500-5 3.500 5z" fill="#f2c38a" stroke="#8a6a3a" stroke-width=".5"/><path d="M10.300 1l1.200-2 1.200 2z" fill="#333"/><path d="M10.300 4v17M12.700 4v17" stroke="#0f8a22" stroke-width=".8"/></g></svg>
<!--TB_END-->
<div id="map">
<!--MAPSVG_BEGIN-->
<svg width="1368" height="868" viewBox="1 141 1368 868" style="position:absolute;left:0;top:0;display:block">
<path d="M154.5 141.0 L154.5 1009.0" fill="none" stroke="#e9e9e9" stroke-width="1" />
<path d="M447.5 141.0 L447.5 156.0" fill="none" stroke="#e9e9e9" stroke-width="1" />
<path d="M1193.8 141.0 L1194.3 1009.0" fill="none" stroke="#e9e9e9" stroke-width="1" />
<path d="M184.0 141.0 L185.0 420.0 L187.0 600.0 L190.0 739.0" fill="none" stroke="#e2e2e2" stroke-width="2.8" />
<path d="M244.0 141.0 L246.0 420.0 L248.0 540.0 L250.0 739.0" fill="none" stroke="#e2e2e2" stroke-width="2.8" />
<path d="M177.0 141.0 L179.0 420.0 L182.0 600.0 L185.0 740.0" fill="none" stroke="#f3b1b1" stroke-width="1" />
<path d="M190.8 739.0 L249.8 738.3" fill="none" stroke="#e2e2e2" stroke-width="2.8" />
<path d="M190 739 C193 790 205 815 221.4 839.6 C236 862 252 878 272.4 891.6 C305 913 345 925 387 929 L655 938.5 L968.3 949.3" fill="none" stroke="#e2e2e2" stroke-width="2.8" />
<path d="M250 739 C254 785 268 812 290.8 832 C316 853 348 865 386 869.4 L655 879.6 L844.6 885.4 L968.3 889" fill="none" stroke="#e2e2e2" stroke-width="2.8" />
<path d="M185 740 C188 795 199 822 214 845 C222 857 231 868 240 877" fill="none" stroke="#f3b1b1" stroke-width="1" />
<path d="M246 886 C262 903 300 925 345 934 C360 937 375 938.5 390 939 L470 941.5 L470 962 L496 962 L496 942.3 L655 947 L968 957" fill="none" stroke="#a6e8a6" stroke-width="1" />
<path d="M968.3 889 C1010 888 1045 872 1063.2 850.2 C1085 824 1099 795 1101.8 757" fill="none" stroke="#e2e2e2" stroke-width="2.8" />
<path d="M968.3 949.3 C1030 948 1075 925 1104.9 893.4 C1140 856 1160 810 1163 757" fill="none" stroke="#e2e2e2" stroke-width="2.8" />
<path d="M765 863 L765 874.7 L860 878 L980.3 880.9 C1000 879 1008 875 1015.4 872 C1035 864 1050 855 1059 845.8 C1080 823 1092 795 1095 760 L1182.3 759.5" fill="none" stroke="#f3b1b1" stroke-width="1" />
<path d="M1101.5 141 C1107 160 1108.2 175 1108.2 189.4 L1106.8 331.6 L1104 545 L1101.5 700 L1101.8 757" fill="none" stroke="#e2e2e2" stroke-width="2.8" />
<path d="M1162.9 141 C1165.5 165 1167 180 1167 200 L1165 545 L1163 757" fill="none" stroke="#e2e2e2" stroke-width="2.8" />
<path d="M1096.0 758.0 L1194.0 757.0" fill="none" stroke="#e2e2e2" stroke-width="2.8" />
<path d="M1168.0 188.0 L1194.0 188.0" fill="none" stroke="#e9e9e9" stroke-width="1" />
<path d="M640 322 L977.4 324.1 C1015 322 1048 305 1070.8 282.8 C1095 258 1108 225 1108.7 189.4" fill="none" stroke="#e2e2e2" stroke-width="2.8" />
<path d="M640 380.5 L977.9 384.2 C1005 383 1032 376 1055.6 365.5 C1075 356 1093 345 1107.6 331.6" fill="none" stroke="#e2e2e2" stroke-width="2.8" />
<path d="M1070.8 196.6 L1130 196.5 L1130 195 L1177 194.7 Q1189 195.5 1189.5 209 L1187.7 420 L1186.5 757" fill="none" stroke="#f3b1b1" stroke-width="1" />
<path d="M1022.8 167.5 L1072.1 199.2 L1042.8 244.9 L993.4 212 Z" fill="none" stroke="#f3b1b1" stroke-width="1" />
<path d="M1081.5 145.3 L1045.4 189.4" fill="none" stroke="#f3b1b1" stroke-width="1" stroke-dasharray="14 3 3 3"/>
<path d="M1022.8 141.0 L1108.2 189.4" fill="none" stroke="#e9e9e9" stroke-width="1.8" />
<path d="M976.0 198.7 L976.5 324.0" fill="none" stroke="#e9e9e9" stroke-width="1.8" />
<path d="M884.0 165.3 L976.0 168.0" fill="none" stroke="#e9e9e9" stroke-width="1" />
<path d="M686.6 162.0 L884.0 165.3" fill="none" stroke="#e9e9e9" stroke-width="1.8" />
<path d="M686.6 162.0 L685.6 321.0" fill="none" stroke="#e9e9e9" stroke-width="1.8" />
<path d="M751.4 162.0 L750.4 321.0" fill="none" stroke="#e9e9e9" stroke-width="1.8" />
<path d="M817.4 162.0 L816.4 321.0" fill="none" stroke="#e9e9e9" stroke-width="1.8" />
<path d="M884.0 165.0 L883.0 321.0" fill="none" stroke="#e9e9e9" stroke-width="1.8" />
<path d="M767.5 141.0 L767.5 162.0" fill="none" stroke="#e9e9e9" stroke-width="2" />
<path d="M686 193.4 L884 195.6 L884.4 284.4 L685.5 282.4 Z M752 194 L751.5 283 M818 195 L817.8 283.8" fill="none" stroke="#b9b9b9" stroke-width="1" />
<path d="M659.0 380.5 L657.4 544.0 L657.0 626.5 L655.6 880.0 L655.6 1009.0" fill="none" stroke="#e9e9e9" stroke-width="1.8" />
<path d="M758.0 380.5 L758.5 431.0" fill="none" stroke="#e9e9e9" stroke-width="1.8" />
<path d="M857.9 381.8 L857.8 432.7" fill="none" stroke="#e9e9e9" stroke-width="1.8" />
<path d="M658.5 430 L857.8 432.7 L856 544.3 L657.4 542 Z M758.5 431 L756.7 563" fill="none" stroke="#b9b9b9" stroke-width="1" />
<path d="M856.0 544.3 L1104.5 545.4" fill="none" stroke="#e9e9e9" stroke-width="1.8" />
<path d="M855.5 544.0 L855.2 628.3" fill="none" stroke="#e9e9e9" stroke-width="1.8" />
<path d="M250.0 623.8 L657.0 626.5 L855.0 628.0" fill="none" stroke="#e9e9e9" stroke-width="1.8" />
<path d="M756.7 563.0 L756.3 626.5" fill="none" stroke="#e9e9e9" stroke-width="1.8" />
<path d="M807.4 627.2 L807.4 789.6" fill="none" stroke="#e9e9e9" stroke-width="1.8" />
<path d="M706.7 786.0 L807.4 789.6 L847.0 791.4" fill="none" stroke="#e9e9e9" stroke-width="1.8" />
<path d="M706.7 786.0 L704.5 880.9" fill="none" stroke="#e9e9e9" stroke-width="1.8" />
<path d="M847.0 791.4 L844.9 885.2" fill="none" stroke="#e9e9e9" stroke-width="1.8" />
<path d="M968.7 949.3 L969.4 1009.0" fill="none" stroke="#e9e9e9" stroke-width="1.8" />
<path d="M766.4 502.6H848V519.6H766.4Z M781.7 502.6V519.6 M803.8 502.6V519.6 M825.5 502.6V519.6" fill="none" stroke="#a9a9a9" stroke-width="1" />
<text x="807.0" y="516.0" font-family="'DejaVu Sans Light','DejaVu Sans','Liberation Sans',sans-serif" font-weight="200" font-style="normal" font-size="13" fill="#a0a0a0" text-anchor="start" >16</text>
<text x="832.0" y="516.0" font-family="'DejaVu Sans Light','DejaVu Sans','Liberation Sans',sans-serif" font-weight="200" font-style="normal" font-size="13" fill="#a0a0a0" text-anchor="start" >0</text>
<path d="M248.0 539.5 L380.0 539.5" fill="none" stroke="#e9e9e9" stroke-width="1.8" />
<path d="M381.0 419.0 L380.0 539.5" fill="none" stroke="#e9e9e9" stroke-width="1.8" />
<path d="M282.8 427.8H363.6V444.4H282.8Z M296.7 427.8V444.4 M319.2 427.8V444.4 M341.8 427.8V444.4" fill="none" stroke="#a9a9a9" stroke-width="1" />
<text x="326.0" y="441.0" font-family="'DejaVu Sans Light','DejaVu Sans','Liberation Sans',sans-serif" font-weight="200" font-style="normal" font-size="13" fill="#a0a0a0" text-anchor="start" >0</text>
<text x="345.0" y="441.0" font-family="'DejaVu Sans Light','DejaVu Sans','Liberation Sans',sans-serif" font-weight="200" font-style="normal" font-size="13" fill="#a0a0a0" text-anchor="start" >35</text>
<path d="M255 449.3H307.3V476.3H255Z" fill="none" stroke="#b4b4c2" stroke-width="1" />
<rect x="279.6" y="472.4" width="27" height="27" rx="3" fill="#fbd5b0" stroke="#d8c0b0" stroke-width="1"/>
<path d="M283 475 L293 486 L283 497 Z M303 475 L293 486 L303 497 Z" fill="#f5c49a" stroke="#d9b9a0" stroke-width="1" />
<path d="M314 675.8 L545.5 681.7 L541.4 828.5 L309 823 Z" fill="none" stroke="#b9b9b9" stroke-width="1" />
<path d="M399 747.6H480.6V764.3H399Z M413.3 747.6V764.3 M436.6 747.6V764.3 M459 747.6V764.3" fill="none" stroke="#a9a9a9" stroke-width="1" />
<text x="443.0" y="761.0" font-family="'DejaVu Sans Light','DejaVu Sans','Liberation Sans',sans-serif" font-weight="200" font-style="normal" font-size="13" fill="#a0a0a0" text-anchor="start" >5</text>
<text x="466.0" y="761.0" font-family="'DejaVu Sans Light','DejaVu Sans','Liberation Sans',sans-serif" font-weight="200" font-style="normal" font-size="13" fill="#a0a0a0" text-anchor="start" >0</text>
<text x="417.0" y="815.0" font-family="'DejaVu Sans Light','DejaVu Sans','Liberation Sans',sans-serif" font-weight="200" font-style="normal" font-size="17" fill="#9a9a9a" text-anchor="start" >5</text>
<path d="M222.0 839.6 L155.5 900.3 L155.5 930.0 L188.5 970.0 L272.4 891.6" fill="none" stroke="#e9e9e9" stroke-width="1.8" />
<path d="M164 930 L200.6 898 L218 917 L181.5 949 Z" fill="none" stroke="#f3b1b1" stroke-width="1" />
<circle cx="190" cy="923" r="4" fill="none" stroke="#f3b1b1"/>
<circle cx="178.8" cy="851" r="14" fill="none" stroke="#a8eca8" stroke-width="1"/>
<text x="178.8" y="859.0" font-family="'DejaVu Sans Light','DejaVu Sans','Liberation Sans',sans-serif" font-weight="200" font-style="normal" font-size="22" fill="#a8eca8" text-anchor="middle" >H</text>
<path d="M186 1009 L186 994.3 L419 992.6 L419 1009" fill="none" stroke="#b9b9b9" stroke-width="1" />
<path d="M298.0 1009.0 L304.0 1000.0" fill="none" stroke="#b9b9b9" stroke-width="1" />
<path d="M790 1009 L790 1002.5 L920.7 998.8 L920.7 1009" fill="none" stroke="#b9b9b9" stroke-width="1" />
<path d="M1017.6 1009 L1008.8 991.6 L1125.2 932.8 L1160 997 L1155 1009" fill="none" stroke="#b9b9b9" stroke-width="1" />
<path d="M1073.5 968.6 L1080.0 977.3" fill="none" stroke="#b9b9b9" stroke-width="1" />
<path d="M533.7 1009 L533.7 984 L618.4 984 L621 1009" fill="none" stroke="#a9a9f2" stroke-width="2.5" />
<path d="M451.5 974H495.3V991H451.5Z M455.3 975.8H491V982.5H455.3Z" fill="none" stroke="#b6b6f0" stroke-width="1" />
<path d="M581 832.9H625.5V856.7H581Z M585 840.5H620.8V848H585Z" fill="none" stroke="#b6b6f0" stroke-width="1" />
<path d="M722.5 794.3 L819.6 797.1 L817.9 862.9 L720.3 859.4 Z" fill="none" stroke="#f3b1b1" stroke-width="1" />
<circle cx="766.8" cy="827" r="6.5" fill="none" stroke="#f3b1b1"/>
<g stroke="#a6e8a6" fill="none"><circle cx="765.3" cy="982.2" r="9.2"/><path d="M759 975.5l12.6 13.4M771.6 975.5l-12.6 13.4M767 973L771.8 962"/><path d="M981 982l13 17M994 982l-13 17M984 966L987.500 990"/></g>
<g stroke="#b5b5b5" stroke-width=".7" fill="#fff"><circle cx="659.0" cy="380.5" r="2.8"/><path d="M657.2 378.7l3.6 3.6m0-3.6l-3.6 3.6" fill="none"/></g>
<g stroke="#b5b5b5" stroke-width=".7" fill="#fff"><circle cx="758.0" cy="380.5" r="2.8"/><path d="M756.2 378.7l3.6 3.6m0-3.6l-3.6 3.6" fill="none"/></g>
<g stroke="#b5b5b5" stroke-width=".7" fill="#fff"><circle cx="857.9" cy="381.8" r="2.8"/><path d="M856.1 380.0l3.6 3.6m0-3.6l-3.6 3.6" fill="none"/></g>
<g stroke="#b5b5b5" stroke-width=".7" fill="#fff"><circle cx="977.9" cy="384.2" r="2.8"/><path d="M976.1 382.4l3.6 3.6m0-3.6l-3.6 3.6" fill="none"/></g>
<g stroke="#b5b5b5" stroke-width=".7" fill="#fff"><circle cx="1055.6" cy="365.5" r="2.8"/><path d="M1053.8 363.7l3.6 3.6m0-3.6l-3.6 3.6" fill="none"/></g>
<g stroke="#b5b5b5" stroke-width=".7" fill="#fff"><circle cx="1107.6" cy="331.6" r="2.8"/><path d="M1105.8 329.8l3.6 3.6m0-3.6l-3.6 3.6" fill="none"/></g>
<g stroke="#b5b5b5" stroke-width=".7" fill="#fff"><circle cx="977.4" cy="324.1" r="2.8"/><path d="M975.6 322.3l3.6 3.6m0-3.6l-3.6 3.6" fill="none"/></g>
<g stroke="#b5b5b5" stroke-width=".7" fill="#fff"><circle cx="1070.8" cy="282.8" r="2.8"/><path d="M1069.0 281.0l3.6 3.6m0-3.6l-3.6 3.6" fill="none"/></g>
<g stroke="#b5b5b5" stroke-width=".7" fill="#fff"><circle cx="1108.7" cy="189.4" r="2.8"/><path d="M1106.9 187.6l3.6 3.6m0-3.6l-3.6 3.6" fill="none"/></g>
<g stroke="#b5b5b5" stroke-width=".7" fill="#fff"><circle cx="1167.0" cy="188.0" r="2.8"/><path d="M1165.2 186.2l3.6 3.6m0-3.6l-3.6 3.6" fill="none"/></g>
<g stroke="#b5b5b5" stroke-width=".7" fill="#fff"><circle cx="1194.0" cy="188.0" r="2.8"/><path d="M1192.2 186.2l3.6 3.6m0-3.6l-3.6 3.6" fill="none"/></g>
<g stroke="#b5b5b5" stroke-width=".7" fill="#fff"><circle cx="976.0" cy="198.7" r="2.8"/><path d="M974.2 196.9l3.6 3.6m0-3.6l-3.6 3.6" fill="none"/></g>
<g stroke="#b5b5b5" stroke-width=".7" fill="#fff"><circle cx="686.0" cy="322.0" r="2.8"/><path d="M684.2 320.2l3.6 3.6m0-3.6l-3.6 3.6" fill="none"/></g>
<g stroke="#b5b5b5" stroke-width=".7" fill="#fff"><circle cx="750.5" cy="322.0" r="2.8"/><path d="M748.7 320.2l3.6 3.6m0-3.6l-3.6 3.6" fill="none"/></g>
<g stroke="#b5b5b5" stroke-width=".7" fill="#fff"><circle cx="816.5" cy="322.0" r="2.8"/><path d="M814.7 320.2l3.6 3.6m0-3.6l-3.6 3.6" fill="none"/></g>
<g stroke="#b5b5b5" stroke-width=".7" fill="#fff"><circle cx="883.0" cy="322.0" r="2.8"/><path d="M881.2 320.2l3.6 3.6m0-3.6l-3.6 3.6" fill="none"/></g>
<g stroke="#b5b5b5" stroke-width=".7" fill="#fff"><circle cx="856.0" cy="544.3" r="2.8"/><path d="M854.2 542.5l3.6 3.6m0-3.6l-3.6 3.6" fill="none"/></g>
<g stroke="#b5b5b5" stroke-width=".7" fill="#fff"><circle cx="1104.5" cy="545.4" r="2.8"/><path d="M1102.7 543.6l3.6 3.6m0-3.6l-3.6 3.6" fill="none"/></g>
<g stroke="#b5b5b5" stroke-width=".7" fill="#fff"><circle cx="657.0" cy="626.5" r="2.8"/><path d="M655.2 624.7l3.6 3.6m0-3.6l-3.6 3.6" fill="none"/></g>
<g stroke="#b5b5b5" stroke-width=".7" fill="#fff"><circle cx="756.3" cy="626.5" r="2.8"/><path d="M754.5 624.7l3.6 3.6m0-3.6l-3.6 3.6" fill="none"/></g>
<g stroke="#b5b5b5" stroke-width=".7" fill="#fff"><circle cx="807.4" cy="627.2" r="2.8"/><path d="M805.6 625.4l3.6 3.6m0-3.6l-3.6 3.6" fill="none"/></g>
<g stroke="#b5b5b5" stroke-width=".7" fill="#fff"><circle cx="855.0" cy="628.0" r="2.8"/><path d="M853.2 626.2l3.6 3.6m0-3.6l-3.6 3.6" fill="none"/></g>
<g stroke="#b5b5b5" stroke-width=".7" fill="#fff"><circle cx="706.7" cy="786.0" r="2.8"/><path d="M704.9 784.2l3.6 3.6m0-3.6l-3.6 3.6" fill="none"/></g>
<g stroke="#b5b5b5" stroke-width=".7" fill="#fff"><circle cx="807.4" cy="789.6" r="2.8"/><path d="M805.6 787.8l3.6 3.6m0-3.6l-3.6 3.6" fill="none"/></g>
<g stroke="#b5b5b5" stroke-width=".7" fill="#fff"><circle cx="847.0" cy="791.4" r="2.8"/><path d="M845.2 789.6l3.6 3.6m0-3.6l-3.6 3.6" fill="none"/></g>
<g stroke="#b5b5b5" stroke-width=".7" fill="#fff"><circle cx="704.5" cy="880.9" r="2.8"/><path d="M702.7 879.1l3.6 3.6m0-3.6l-3.6 3.6" fill="none"/></g>
<g stroke="#b5b5b5" stroke-width=".7" fill="#fff"><circle cx="844.9" cy="885.2" r="2.8"/><path d="M843.1 883.4l3.6 3.6m0-3.6l-3.6 3.6" fill="none"/></g>
<g stroke="#b5b5b5" stroke-width=".7" fill="#fff"><circle cx="655.6" cy="879.8" r="2.8"/><path d="M653.8 878.0l3.6 3.6m0-3.6l-3.6 3.6" fill="none"/></g>
<g stroke="#b5b5b5" stroke-width=".7" fill="#fff"><circle cx="655.6" cy="938.3" r="2.8"/><path d="M653.8 936.5l3.6 3.6m0-3.6l-3.6 3.6" fill="none"/></g>
<g stroke="#b5b5b5" stroke-width=".7" fill="#fff"><circle cx="968.3" cy="889.0" r="2.8"/><path d="M966.5 887.2l3.6 3.6m0-3.6l-3.6 3.6" fill="none"/></g>
<g stroke="#b5b5b5" stroke-width=".7" fill="#fff"><circle cx="968.3" cy="949.3" r="2.8"/><path d="M966.5 947.5l3.6 3.6m0-3.6l-3.6 3.6" fill="none"/></g>
<g stroke="#b5b5b5" stroke-width=".7" fill="#fff"><circle cx="1063.2" cy="850.2" r="2.8"/><path d="M1061.4 848.4l3.6 3.6m0-3.6l-3.6 3.6" fill="none"/></g>
<g stroke="#b5b5b5" stroke-width=".7" fill="#fff"><circle cx="1104.9" cy="893.4" r="2.8"/><path d="M1103.1 891.6l3.6 3.6m0-3.6l-3.6 3.6" fill="none"/></g>
<g stroke="#b5b5b5" stroke-width=".7" fill="#fff"><circle cx="1102.6" cy="757.0" r="2.8"/><path d="M1100.8 755.2l3.6 3.6m0-3.6l-3.6 3.6" fill="none"/></g>
<g stroke="#b5b5b5" stroke-width=".7" fill="#fff"><circle cx="1163.0" cy="757.0" r="2.8"/><path d="M1161.2 755.2l3.6 3.6m0-3.6l-3.6 3.6" fill="none"/></g>
<g stroke="#b5b5b5" stroke-width=".7" fill="#fff"><circle cx="1194.0" cy="757.0" r="2.8"/><path d="M1192.2 755.2l3.6 3.6m0-3.6l-3.6 3.6" fill="none"/></g>
<g stroke="#b5b5b5" stroke-width=".7" fill="#fff"><circle cx="248.0" cy="539.5" r="2.8"/><path d="M246.2 537.7l3.6 3.6m0-3.6l-3.6 3.6" fill="none"/></g>
<g stroke="#b5b5b5" stroke-width=".7" fill="#fff"><circle cx="380.0" cy="539.5" r="2.8"/><path d="M378.2 537.7l3.6 3.6m0-3.6l-3.6 3.6" fill="none"/></g>
<g stroke="#b5b5b5" stroke-width=".7" fill="#fff"><circle cx="190.8" cy="739.0" r="2.8"/><path d="M189.0 737.2l3.6 3.6m0-3.6l-3.6 3.6" fill="none"/></g>
<g stroke="#b5b5b5" stroke-width=".7" fill="#fff"><circle cx="249.8" cy="738.3" r="2.8"/><path d="M248.0 736.5l3.6 3.6m0-3.6l-3.6 3.6" fill="none"/></g>
<g stroke="#b5b5b5" stroke-width=".7" fill="#fff"><circle cx="221.4" cy="839.6" r="2.8"/><path d="M219.6 837.8l3.6 3.6m0-3.6l-3.6 3.6" fill="none"/></g>
<g stroke="#b5b5b5" stroke-width=".7" fill="#fff"><circle cx="290.8" cy="832.0" r="2.8"/><path d="M289.0 830.2l3.6 3.6m0-3.6l-3.6 3.6" fill="none"/></g>
<g stroke="#b5b5b5" stroke-width=".7" fill="#fff"><circle cx="272.4" cy="891.6" r="2.8"/><path d="M270.6 889.8l3.6 3.6m0-3.6l-3.6 3.6" fill="none"/></g>
<g stroke="#b5b5b5" stroke-width=".7" fill="#fff"><circle cx="386.0" cy="869.4" r="2.8"/><path d="M384.2 867.6l3.6 3.6m0-3.6l-3.6 3.6" fill="none"/></g>
<g stroke="#b5b5b5" stroke-width=".7" fill="#fff"><circle cx="387.0" cy="929.0" r="2.8"/><path d="M385.2 927.2l3.6 3.6m0-3.6l-3.6 3.6" fill="none"/></g>
<g stroke="#b5b5b5" stroke-width=".7" fill="#fff"><circle cx="155.5" cy="900.3" r="2.8"/><path d="M153.7 898.5l3.6 3.6m0-3.6l-3.6 3.6" fill="none"/></g>
<g stroke="#b5b5b5" stroke-width=".7" fill="#fff"><circle cx="155.5" cy="930.0" r="2.8"/><path d="M153.7 928.2l3.6 3.6m0-3.6l-3.6 3.6" fill="none"/></g>
<g stroke="#b5b5b5" stroke-width=".7" fill="#fff"><circle cx="188.5" cy="970.0" r="2.8"/><path d="M186.7 968.2l3.6 3.6m0-3.6l-3.6 3.6" fill="none"/></g>
<path d="M683.6 162.0l3 -3l3 3l-3 3z" fill="#fff" stroke="#c4c4c4" stroke-width=".7"/>
<path d="M748.4 163.0l3 -3l3 3l-3 3z" fill="#fff" stroke="#c4c4c4" stroke-width=".7"/>
<path d="M764.5 162.5l3 -3l3 3l-3 3z" fill="#fff" stroke="#c4c4c4" stroke-width=".7"/>
<path d="M814.4 164.0l3 -3l3 3l-3 3z" fill="#fff" stroke="#c4c4c4" stroke-width=".7"/>
<path d="M881.0 165.3l3 -3l3 3l-3 3z" fill="#fff" stroke="#c4c4c4" stroke-width=".7"/>
<path d="M1104.0 154.0l3 -3l3 3l-3 3z" fill="#fff" stroke="#c4c4c4" stroke-width=".7"/>
<text x="721.8" y="186.8" font-family="'DejaVu Sans Light','DejaVu Sans','Liberation Sans',sans-serif" font-weight="200" font-style="italic" font-size="20" fill="#e4e4e4" text-anchor="middle" >8</text>
<text x="841.5" y="185.7" font-family="'DejaVu Sans Light','DejaVu Sans','Liberation Sans',sans-serif" font-weight="200" font-style="italic" font-size="20" fill="#e4e4e4" text-anchor="middle" >10</text>
<text x="958.0" y="194.6" font-family="'DejaVu Sans Light','DejaVu Sans','Liberation Sans',sans-serif" font-weight="200" font-style="italic" font-size="24" fill="#e9e9e9" text-anchor="middle" >26</text>
<text x="1075.0" y="235.2" font-family="'DejaVu Sans Light','DejaVu Sans','Liberation Sans',sans-serif" font-weight="200" font-style="italic" font-size="20" fill="#e4e4e4" text-anchor="middle" >11</text>
<text x="1135.0" y="362.2" font-family="'DejaVu Sans Light','DejaVu Sans','Liberation Sans',sans-serif" font-weight="200" font-style="italic" font-size="20" fill="#e4e4e4" text-anchor="middle" >6</text>
<text x="845.0" y="313.8" font-family="'DejaVu Sans Light','DejaVu Sans','Liberation Sans',sans-serif" font-weight="200" font-style="italic" font-size="20" fill="#e4e4e4" text-anchor="middle" >9</text>
<text x="652.0" y="358.9" font-family="'DejaVu Sans Light','DejaVu Sans','Liberation Sans',sans-serif" font-weight="200" font-style="italic" font-size="20" fill="#e4e4e4" text-anchor="middle" >7</text>
<text x="983.8" y="473.2" font-family="'DejaVu Sans Light','DejaVu Sans','Liberation Sans',sans-serif" font-weight="200" font-style="italic" font-size="20" fill="#e4e4e4" text-anchor="middle" >16</text>
<text x="1180.0" y="440.6" font-family="'DejaVu Sans Light','DejaVu Sans','Liberation Sans',sans-serif" font-weight="200" font-style="italic" font-size="24" fill="#ececec" text-anchor="middle" >34</text>
<text x="558.6" y="540.8" font-family="'DejaVu Sans Light','DejaVu Sans','Liberation Sans',sans-serif" font-weight="200" font-style="italic" font-size="20" fill="#e4e4e4" text-anchor="middle" >19</text>
<text x="713.0" y="588.2" font-family="'DejaVu Sans Light','DejaVu Sans','Liberation Sans',sans-serif" font-weight="200" font-style="italic" font-size="20" fill="#e4e4e4" text-anchor="middle" >14</text>
<text x="802.7" y="588.2" font-family="'DejaVu Sans Light','DejaVu Sans','Liberation Sans',sans-serif" font-weight="200" font-style="italic" font-size="20" fill="#e4e4e4" text-anchor="middle" >13</text>
<text x="1003.8" y="630.2" font-family="'DejaVu Sans Light','DejaVu Sans','Liberation Sans',sans-serif" font-weight="200" font-style="italic" font-size="20" fill="#e4e4e4" text-anchor="middle" >15</text>
<text x="733.8" y="670.7" font-family="'DejaVu Sans Light','DejaVu Sans','Liberation Sans',sans-serif" font-weight="200" font-style="italic" font-size="20" fill="#e4e4e4" text-anchor="middle" >20</text>
<text x="608.0" y="750.7" font-family="'DejaVu Sans Light','DejaVu Sans','Liberation Sans',sans-serif" font-weight="200" font-style="italic" font-size="20" fill="#e4e4e4" text-anchor="middle" >17</text>
<text x="840.7" y="764.9" font-family="'DejaVu Sans Light','DejaVu Sans','Liberation Sans',sans-serif" font-weight="200" font-style="italic" font-size="20" fill="#e4e4e4" text-anchor="middle" >12</text>
<text x="179.8" y="827.7" font-family="'DejaVu Sans Light','DejaVu Sans','Liberation Sans',sans-serif" font-weight="200" font-style="italic" font-size="22" fill="#ececec" text-anchor="middle" >35</text>
<text x="247.5" y="827.7" font-family="'DejaVu Sans Light','DejaVu Sans','Liberation Sans',sans-serif" font-weight="200" font-style="italic" font-size="22" fill="#ececec" text-anchor="middle" >32</text>
<text x="679.0" y="905.2" font-family="'DejaVu Sans Light','DejaVu Sans','Liberation Sans',sans-serif" font-weight="200" font-style="italic" font-size="20" fill="#e4e4e4" text-anchor="middle" >1</text>
<path d="M807.6 309 L829 303 L831 311.8 Z M829 307.5 L818 308.5" fill="none" stroke="#e2e2e2" stroke-width="1" />
<path d="M831.7 776 L836 799 L840.8 776 M836 770 L836 799" fill="none" stroke="#e2e2e2" stroke-width="1" />
<path d="M245.7 823.0 L238.8 859.7" fill="none" stroke="#dfe6f2" stroke-width="1" />
<text x="707.0" y="272.0" font-family="'DejaVu Sans Light','DejaVu Sans','Liberation Sans',sans-serif" font-weight="200" font-style="normal" font-size="17" fill="#8f8f8f" text-anchor="start" >1</text>
<text x="775.0" y="271.0" font-family="'DejaVu Sans Light','DejaVu Sans','Liberation Sans',sans-serif" font-weight="200" font-style="normal" font-size="17" fill="#8f8f8f" text-anchor="start" >2</text>
<text x="840.0" y="277.0" font-family="'DejaVu Sans Light','DejaVu Sans','Liberation Sans',sans-serif" font-weight="200" font-style="normal" font-size="17" fill="#8f8f8f" text-anchor="start" >3</text>
<text x="707.0" y="452.0" font-family="'DejaVu Sans Light','DejaVu Sans','Liberation Sans',sans-serif" font-weight="200" font-style="normal" font-size="17" fill="#8f8f8f" text-anchor="start" >5</text>
<text x="803.0" y="454.0" font-family="'DejaVu Sans Light','DejaVu Sans','Liberation Sans',sans-serif" font-weight="200" font-style="normal" font-size="17" fill="#8f8f8f" text-anchor="start" >4</text>
<text x="778.0" y="345.0" font-family="'DejaVu Sans Light','DejaVu Sans','Liberation Sans',sans-serif" font-weight="200" font-style="italic" font-size="25" fill="#cdcdcd" text-anchor="start" textLength="138" lengthAdjust="spacingAndGlyphs">Mittelstieg</text>
<text x="857.0" y="908.5" font-family="'DejaVu Sans Light','DejaVu Sans','Liberation Sans',sans-serif" font-weight="200" font-style="italic" font-size="26" fill="#c2c2c2" text-anchor="start" textLength="98" lengthAdjust="spacingAndGlyphs" transform="rotate(1.8 857 908)">Südring</text>
<text x="1124.0" y="690.0" font-family="'DejaVu Sans Light','DejaVu Sans','Liberation Sans',sans-serif" font-weight="200" font-style="italic" font-size="25" fill="#c6c6c6" text-anchor="start" textLength="92" lengthAdjust="spacingAndGlyphs" transform="rotate(-82 1124 690)">Ostring</text>
<text x="664.0" y="745.0" font-family="'DejaVu Sans Light','DejaVu Sans','Liberation Sans',sans-serif" font-weight="200" font-style="normal" font-size="30" fill="#f5b4b4" text-anchor="start" textLength="134" lengthAdjust="spacingAndGlyphs">Siedlung</text>
<text x="212.0" y="987.0" font-family="'DejaVu Sans Light','DejaVu Sans','Liberation Sans',sans-serif" font-weight="200" font-style="normal" font-size="31" fill="#f5b4b4" text-anchor="start" textLength="168" lengthAdjust="spacingAndGlyphs">Wohnblock</text>
<text x="986.0" y="243.0" font-family="'DejaVu Sans Light','DejaVu Sans','Liberation Sans',sans-serif" font-weight="200" font-style="normal" font-size="21.5" fill="#f3a0a0" text-anchor="start" >S3</text>
<text x="665.5" y="825.0" font-family="'DejaVu Sans Light','DejaVu Sans','Liberation Sans',sans-serif" font-weight="200" font-style="normal" font-size="21.5" fill="#f3b0b0" text-anchor="start" >S2</text>
<text x="204.0" y="879.0" font-family="'DejaVu Sans Light','DejaVu Sans','Liberation Sans',sans-serif" font-weight="200" font-style="normal" font-size="21.5" fill="#f3b0b0" text-anchor="start" >S6</text>
<text x="611.0" y="822.0" font-family="'Liberation Sans','DejaVu Sans','Liberation Sans',sans-serif" font-weight="bold" font-style="normal" font-size="21" fill="#a9a9f3" text-anchor="start" >V3</text>
<path d="M968.3 657.4 L1020 763.2 L906.7 821.2 L851.7 717.9 Z" fill="#b3d5ec" stroke="#9fb4c4" stroke-width="1" />
<text x="962.0" y="782.8" font-family="'DejaVu Sans Light','DejaVu Sans','Liberation Sans',sans-serif" font-weight="200" font-style="italic" font-size="16" fill="#9ab0c0" text-anchor="middle" transform="rotate(-27 962.0 777.0)">3</text>
<path d="M775.6 164.2 L731.6 270.8 M784.4 166.4 L797.6 270.8 M787.0 144.6 L936.0 151.8 M930.5 173.0 L863.5 271.9 M948.0 154.0 L1005.3 193.8 L1031.6 204.8 M1008.0 160.0 L1008.6 187.0" fill="none" stroke="#a3a3b5" stroke-width="7.5" stroke-linecap="butt" stroke-linejoin="round"/>
<path d="M775.6 164.2 L731.6 270.8 M784.4 166.4 L797.6 270.8 M787.0 144.6 L936.0 151.8 M930.5 173.0 L863.5 271.9 M948.0 154.0 L1005.3 193.8 L1031.6 204.8 M1008.0 160.0 L1008.6 187.0" fill="none" stroke="#e4e4fb" stroke-width="5.5" stroke-linecap="butt" stroke-linejoin="round"/>
<path d="M780.0 167.2L771.8 141.3L791.1 142.3Z" fill="#a3a3b5" stroke="#a3a3b5" stroke-width="3.0" stroke-linejoin="round"/>
<path d="M780.0 167.2L771.8 141.3L791.1 142.3Z" fill="#e4e4fb" stroke="#e4e4fb" stroke-width=".6" stroke-linejoin="round"/>
<path d="M780.7 155.0L777.4 145.9L785.0 146.3Z" fill="none" stroke="#a3a3b5" stroke-width="1.1"/>
<path d="M937.3 145.2 L952.9 160 L929 174.3 Z" fill="#e4e4fb" stroke="#a3a3b5" stroke-width="1.5" stroke-linejoin="round"/>
<path d="M939.9 154.7 L945.1 158.2 L937.3 163.4 Z" fill="none" stroke="#a3a3b5" stroke-width="1" />
<path d="M986.8 177.3 L1005.4 178.2 L1006.7 199 Z" fill="#e4e4fb" stroke="#a3a3b5" stroke-width="1.5" stroke-linejoin="round"/>
<path d="M998 183 L1003 184 L1003.5 190 Z" fill="none" stroke="#a3a3b5" stroke-width="1" />
<path d="M1007.7 139.8L1017.7 160.1L998.3 160.3Z" fill="#a3a3b5" stroke="#a3a3b5" stroke-width="3.0" stroke-linejoin="round"/>
<path d="M1007.7 139.8L1017.7 160.1L998.3 160.3Z" fill="#e4e4fb" stroke="#e4e4fb" stroke-width=".6" stroke-linejoin="round"/>
<path d="M1007.8 149.6L1011.7 156.8L1004.2 156.9Z" fill="none" stroke="#a3a3b5" stroke-width="1.1"/>
<path d="M733.0 271.0l-6 -4l4 9z" fill="none" stroke="#a9a9ee" stroke-width="1" />
<path d="M799.0 271.0l-6 -4l4 9z" fill="none" stroke="#a9a9ee" stroke-width="1" />
<path d="M865.0 272.0l-6 -4l4 9z" fill="none" stroke="#a9a9ee" stroke-width="1" />
<circle cx="1033" cy="203.5" r="6.5" fill="none" stroke="#f3b1b1"/>
<path d="M1031.6 207.0 L1025.0 231.2 L1000.9 254.3 L986.6 267.5 L950.3 285.0 L935.0 293.8 L936.5 313.0 L935.6 435.0 M704.0 424.0 L702.8 396.0 L921.0 396.0 L920.0 437.0 M935.0 437.0 L920.0 437.0 L806.5 471.4" fill="none" stroke="#9aa898" stroke-width="7.5" stroke-linecap="round" stroke-linejoin="round"/>
<path d="M1031.6 207.0 L1025.0 231.2 L1000.9 254.3 L986.6 267.5 L950.3 285.0 L935.0 293.8 L936.5 313.0 L935.6 435.0 M704.0 424.0 L702.8 396.0 L921.0 396.0 L920.0 437.0 M935.0 437.0 L920.0 437.0 L806.5 471.4" fill="none" stroke="#afc4ad" stroke-width="5.5" stroke-linecap="round" stroke-linejoin="round"/>
<path d="M991.6 262.5L1002.6 238.9L1016.2 254.1Z" fill="#9aa898" stroke="#9aa898" stroke-width="3.0" stroke-linejoin="round"/>
<path d="M991.6 262.5L1002.6 238.9L1016.2 254.1Z" fill="#afc4ad" stroke="#afc4ad" stroke-width=".6" stroke-linejoin="round"/>
<path d="M1000.1 254.8L1003.7 246.3L1009.0 252.2Z" fill="none" stroke="#9aa898" stroke-width="1.1"/>
<path d="M938.7 290.7L956.9 270.6L965.7 289.0Z" fill="#9aa898" stroke="#9aa898" stroke-width="3.0" stroke-linejoin="round"/>
<path d="M938.7 290.7L956.9 270.6L965.7 289.0Z" fill="#afc4ad" stroke="#afc4ad" stroke-width=".6" stroke-linejoin="round"/>
<path d="M949.5 285.5L955.7 278.1L959.2 285.3Z" fill="none" stroke="#9aa898" stroke-width="1.1"/>
<path d="M936.5 330.2L927.8 306.6L946.2 307.0Z" fill="#9aa898" stroke="#9aa898" stroke-width="3.0" stroke-linejoin="round"/>
<path d="M936.5 330.2L927.8 306.6L946.2 307.0Z" fill="#afc4ad" stroke="#afc4ad" stroke-width=".6" stroke-linejoin="round"/>
<path d="M936.7 319.0L933.3 310.7L940.5 310.8Z" fill="none" stroke="#9aa898" stroke-width="1.1"/>
<path d="M750.8 396.0L775.7 386.8L775.7 405.2Z" fill="#9aa898" stroke="#9aa898" stroke-width="3.0" stroke-linejoin="round"/>
<path d="M750.8 396.0L775.7 386.8L775.7 405.2Z" fill="#afc4ad" stroke="#afc4ad" stroke-width=".6" stroke-linejoin="round"/>
<path d="M762.7 396.0L771.5 392.4L771.5 399.6Z" fill="none" stroke="#9aa898" stroke-width="1.1"/>
<path d="M898.8 396.5L923.4 387.8L923.0 406.2Z" fill="#9aa898" stroke="#9aa898" stroke-width="3.0" stroke-linejoin="round"/>
<path d="M898.8 396.5L923.4 387.8L923.0 406.2Z" fill="#afc4ad" stroke="#afc4ad" stroke-width=".6" stroke-linejoin="round"/>
<path d="M910.5 396.7L919.1 393.3L919.0 400.5Z" fill="none" stroke="#9aa898" stroke-width="1.1"/>
<circle cx="939" cy="433" r="6.5" fill="none" stroke="#9aa898"/>
<circle cx="936" cy="301" r="6.5" fill="none" stroke="#9aa898"/>
<path d="M697 431 A7 7 0 0 1 711 431" fill="none" stroke="#9aa898" stroke-width="7.5" />
<path d="M697 431 A7 7 0 0 1 711 431" fill="none" stroke="#afc4ad" stroke-width="5.5" />
<path d="M806.5 471.4l-2 -5l0 9z" fill="#c8c8f0" stroke="#a9a9ee" stroke-width="1" />
<path d="M603.0 842.5 L610.7 852.4 L610.7 870.0 L733.5 873.2 L760.0 873.5 M760.0 868.0 L771.0 868.3 M798.0 868.8 L918.5 871.6 M947.0 872.0 L982.0 872.3 M766.4 827.0 L758.7 862.0 M952.5 807.5 L978.0 850.0" fill="none" stroke="#000" stroke-width="7.8" stroke-linecap="round" stroke-linejoin="round"/>
<path d="M603.0 842.5 L610.7 852.4 L610.7 870.0 L733.5 873.2 L760.0 873.5 M760.0 868.0 L771.0 868.3 M798.0 868.8 L918.5 871.6 M947.0 872.0 L982.0 872.3 M766.4 827.0 L758.7 862.0 M952.5 807.5 L978.0 850.0" fill="none" stroke="#1f78b8" stroke-width="5.3" stroke-linecap="round" stroke-linejoin="round"/>
<path d="M734.3 874.6L760.7 866.5L759.7 885.4Z" fill="#000" stroke="#000" stroke-width="3.0" stroke-linejoin="round"/>
<path d="M734.3 874.6L760.7 866.5L759.7 885.4Z" fill="#1f78b8" stroke="#1f78b8" stroke-width=".6" stroke-linejoin="round"/>
<path d="M746.7 875.3L756.0 872.0L755.6 879.4Z" fill="none" stroke="#000" stroke-width="1.1"/>
<path d="M797.7 868.8L771.5 878.2L771.5 859.3Z" fill="#000" stroke="#000" stroke-width="3.0" stroke-linejoin="round"/>
<path d="M797.7 868.8L771.5 878.2L771.5 859.3Z" fill="#1f78b8" stroke="#1f78b8" stroke-width=".6" stroke-linejoin="round"/>
<path d="M785.2 868.8L776.0 872.5L776.0 865.1Z" fill="none" stroke="#000" stroke-width="1.1"/>
<path d="M946.5 872.0L919.2 881.3L919.4 862.4Z" fill="#000" stroke="#000" stroke-width="3.0" stroke-linejoin="round"/>
<path d="M946.5 872.0L919.2 881.3L919.4 862.4Z" fill="#1f78b8" stroke="#1f78b8" stroke-width=".6" stroke-linejoin="round"/>
<path d="M933.5 871.9L923.9 875.5L924.0 868.1Z" fill="none" stroke="#000" stroke-width="1.1"/>
<path d="M977.4 851.7L997.5 868.7L980.4 877.9Z" fill="#000" stroke="#000" stroke-width="3.0" stroke-linejoin="round"/>
<path d="M977.4 851.7L997.5 868.7L980.4 877.9Z" fill="#1f78b8" stroke="#1f78b8" stroke-width=".6" stroke-linejoin="round"/>
<path d="M982.9 862.0L990.3 867.8L983.6 871.4Z" fill="none" stroke="#000" stroke-width="1.1"/>
<path d="M942.3 801 A7.6 7.6 0 0 0 957 795.5" fill="none" stroke="#000" stroke-width="7.6" stroke-linecap="round"/>
<path d="M942.3 801 A7.6 7.6 0 0 0 957 795.5" fill="none" stroke="#1f78b8" stroke-width="5" stroke-linecap="round"/>
<circle cx="949.3" cy="799.3" r="2.2" fill="#1f78b8" stroke="#000" stroke-width="1"/>
<circle cx="610.7" cy="856" r="2.4" fill="#1f78b8" stroke="#000" stroke-width=".8"/>
<circle cx="759.5" cy="858" r="2.6" fill="#1f78b8" stroke="#000" stroke-width=".8"/>
<ellipse cx="493.5" cy="830.0" rx="4.5" ry="8" fill="#f9d3b2"/>
<ellipse cx="507.5" cy="830.0" rx="4.5" ry="8" fill="#f9d3b2"/>
<ellipse cx="570.5" cy="981.0" rx="4.5" ry="8" fill="#f9d3b2"/>
<ellipse cx="585.0" cy="981.0" rx="4.5" ry="8" fill="#f9d3b2"/>
<ellipse cx="1063.0" cy="962.0" rx="4.5" ry="8" fill="#f9d3b2"/>
<ellipse cx="1071.0" cy="957.0" rx="4.5" ry="8" fill="#f9d3b2"/>
<path d="M292.9 475.5 L292.3 520.0 L289.0 668.0 L287.6 815.0 L288.6 828.0 L235.0 881.0 L190.2 922.2 M235 881 C255 905 300 932 372 944 L447 947 L465 947 M443.9 950.0 L443.4 990.0 M455.0 951.0 L455.5 966.0 L461.0 969.0 M461.5 951.0 L462.0 968.0 L472.5 978.7 L493.4 970.0 L493.4 952.0 M477.2 974.0 L480.0 880.0 M384.8 855.7 L474.4 857.7 L598.3 861.5 M482.0 866.0 L577.3 871.0 L598.0 871.5 L601.0 842.5 M500.5 826.5 L500.5 855.0 M493.0 948.2 L576.4 950.5 L603.0 951.2 L735.0 956.0 L844.0 959.7 L968.3 963.3 L996.0 962.5 L1025.0 955.0 L1056.0 943.3 L1067.0 962.5 M577.3 958.0 L577.3 985.4 M834.3 975.0 L834.3 1003.6" fill="none" stroke="#000" stroke-width="7.8" stroke-linecap="round" stroke-linejoin="round"/>
<path d="M292.9 475.5 L292.3 520.0 L289.0 668.0 L287.6 815.0 L288.6 828.0 L235.0 881.0 L190.2 922.2 M235 881 C255 905 300 932 372 944 L447 947 L465 947 M443.9 950.0 L443.4 990.0 M455.0 951.0 L455.5 966.0 L461.0 969.0 M461.5 951.0 L462.0 968.0 L472.5 978.7 L493.4 970.0 L493.4 952.0 M477.2 974.0 L480.0 880.0 M384.8 855.7 L474.4 857.7 L598.3 861.5 M482.0 866.0 L577.3 871.0 L598.0 871.5 L601.0 842.5 M500.5 826.5 L500.5 855.0 M493.0 948.2 L576.4 950.5 L603.0 951.2 L735.0 956.0 L844.0 959.7 L968.3 963.3 L996.0 962.5 L1025.0 955.0 L1056.0 943.3 L1067.0 962.5 M577.3 958.0 L577.3 985.4 M834.3 975.0 L834.3 1003.6" fill="none" stroke="#f6821c" stroke-width="5.3" stroke-linecap="round" stroke-linejoin="round"/>
<path d="M292.6 503.8L302.3 530.9L282.5 530.7Z" fill="#000" stroke="#000" stroke-width="3.0" stroke-linejoin="round"/>
<path d="M292.6 503.8L302.3 530.9L282.5 530.7Z" fill="#f6821c" stroke="#f6821c" stroke-width=".6" stroke-linejoin="round"/>
<path d="M292.5 516.7L296.3 526.2L288.6 526.1Z" fill="none" stroke="#000" stroke-width="1.1"/>
<path d="M289.3 653.8L298.7 680.3L279.3 680.1Z" fill="#000" stroke="#000" stroke-width="3.0" stroke-linejoin="round"/>
<path d="M289.3 653.8L298.7 680.3L279.3 680.1Z" fill="#f6821c" stroke="#f6821c" stroke-width=".6" stroke-linejoin="round"/>
<path d="M289.2 666.4L292.8 675.7L285.3 675.6Z" fill="none" stroke="#000" stroke-width="1.1"/>
<path d="M287.5 803.8L297.2 829.2L277.8 829.2Z" fill="#000" stroke="#000" stroke-width="3.0" stroke-linejoin="round"/>
<path d="M287.5 803.8L297.2 829.2L277.8 829.2Z" fill="#f6821c" stroke="#f6821c" stroke-width=".6" stroke-linejoin="round"/>
<path d="M287.5 816.0L291.3 824.9L283.7 824.9Z" fill="none" stroke="#000" stroke-width="1.1"/>
<path d="M233.8 873.9L252.1 860.4L254.3 883.7Z" fill="#000" stroke="#000" stroke-width="3.0" stroke-linejoin="round"/>
<path d="M233.8 873.9L252.1 860.4L254.3 883.7Z" fill="#f6821c" stroke="#f6821c" stroke-width=".6" stroke-linejoin="round"/>
<path d="M243.1 873.0L249.6 867.9L250.4 876.9Z" fill="none" stroke="#000" stroke-width="1.1"/>
<path d="M386.8 944.4L361.0 953.2L361.2 934.8Z" fill="#000" stroke="#000" stroke-width="3.0" stroke-linejoin="round"/>
<path d="M386.8 944.4L361.0 953.2L361.2 934.8Z" fill="#f6821c" stroke="#f6821c" stroke-width=".6" stroke-linejoin="round"/>
<path d="M374.5 944.2L365.4 947.7L365.5 940.5Z" fill="none" stroke="#000" stroke-width="1.1"/>
<path d="M465.0 946.9L439.4 955.0L440.2 936.6Z" fill="#000" stroke="#000" stroke-width="3.0" stroke-linejoin="round"/>
<path d="M465.0 946.9L439.4 955.0L440.2 936.6Z" fill="#f6821c" stroke="#f6821c" stroke-width=".6" stroke-linejoin="round"/>
<path d="M452.9 946.4L443.9 949.6L444.2 942.4Z" fill="none" stroke="#000" stroke-width="1.1"/>
<path d="M443.2 1012.2L433.3 987.1L453.1 987.1Z" fill="#000" stroke="#000" stroke-width="3.0" stroke-linejoin="round"/>
<path d="M443.2 1012.2L433.3 987.1L453.1 987.1Z" fill="#f6821c" stroke="#f6821c" stroke-width=".6" stroke-linejoin="round"/>
<path d="M443.2 1000.2L439.3 991.4L447.1 991.4Z" fill="none" stroke="#000" stroke-width="1.1"/>
<path d="M517.4 948.2L492.1 956.9L492.5 938.5Z" fill="#000" stroke="#000" stroke-width="3.0" stroke-linejoin="round"/>
<path d="M517.4 948.2L492.1 956.9L492.5 938.5Z" fill="#f6821c" stroke="#f6821c" stroke-width=".6" stroke-linejoin="round"/>
<path d="M505.4 948.0L496.5 951.4L496.6 944.2Z" fill="none" stroke="#000" stroke-width="1.1"/>
<path d="M602.2 951.0L577.2 960.7L577.2 941.3Z" fill="#000" stroke="#000" stroke-width="3.0" stroke-linejoin="round"/>
<path d="M602.2 951.0L577.2 960.7L577.2 941.3Z" fill="#f6821c" stroke="#f6821c" stroke-width=".6" stroke-linejoin="round"/>
<path d="M590.2 951.0L581.5 954.8L581.5 947.2Z" fill="none" stroke="#000" stroke-width="1.1"/>
<path d="M475.2 857.7L501.5 849.5L500.9 867.4Z" fill="#000" stroke="#000" stroke-width="3.0" stroke-linejoin="round"/>
<path d="M475.2 857.7L501.5 849.5L500.9 867.4Z" fill="#f6821c" stroke="#f6821c" stroke-width=".6" stroke-linejoin="round"/>
<path d="M487.6 858.1L496.9 854.8L496.7 861.9Z" fill="none" stroke="#000" stroke-width="1.1"/>
<path d="M480.0 865.1L490.7 890.0L470.3 890.4Z" fill="#000" stroke="#000" stroke-width="3.0" stroke-linejoin="round"/>
<path d="M480.0 865.1L490.7 890.0L470.3 890.4Z" fill="#f6821c" stroke="#f6821c" stroke-width=".6" stroke-linejoin="round"/>
<path d="M480.2 877.1L484.4 885.9L476.4 886.0Z" fill="none" stroke="#000" stroke-width="1.1"/>
<path d="M573.8 870.6L600.0 864.3L598.4 881.6Z" fill="#000" stroke="#000" stroke-width="3.0" stroke-linejoin="round"/>
<path d="M573.8 870.6L600.0 864.3L598.4 881.6Z" fill="#f6821c" stroke="#f6821c" stroke-width=".6" stroke-linejoin="round"/>
<path d="M586.0 871.7L595.2 869.1L594.6 875.9Z" fill="none" stroke="#000" stroke-width="1.1"/>
<path d="M570.5 861.5L598.0 853.8L597.0 872.1Z" fill="#000" stroke="#000" stroke-width="3.0" stroke-linejoin="round"/>
<path d="M570.5 861.5L598.0 853.8L597.0 872.1Z" fill="#f6821c" stroke="#f6821c" stroke-width=".6" stroke-linejoin="round"/>
<path d="M583.4 862.2L593.1 859.1L592.7 866.3Z" fill="none" stroke="#000" stroke-width="1.1"/>
<path d="M751.2 956.0L724.6 965.7L724.2 947.3Z" fill="#000" stroke="#000" stroke-width="3.0" stroke-linejoin="round"/>
<path d="M751.2 956.0L724.6 965.7L724.2 947.3Z" fill="#f6821c" stroke="#f6821c" stroke-width=".6" stroke-linejoin="round"/>
<path d="M738.4 956.2L729.1 960.0L728.9 952.8Z" fill="none" stroke="#000" stroke-width="1.1"/>
<path d="M834.0 985.2L825.3 962.9L842.2 962.7Z" fill="#000" stroke="#000" stroke-width="3.0" stroke-linejoin="round"/>
<path d="M834.0 985.2L825.3 962.9L842.2 962.7Z" fill="#f6821c" stroke="#f6821c" stroke-width=".6" stroke-linejoin="round"/>
<path d="M859.2 959.8L832.8 968.8L832.8 950.8Z" fill="#000" stroke="#000" stroke-width="3.0" stroke-linejoin="round"/>
<path d="M859.2 959.8L832.8 968.8L832.8 950.8Z" fill="#f6821c" stroke="#f6821c" stroke-width=".6" stroke-linejoin="round"/>
<path d="M846.6 959.8L837.3 963.3L837.3 956.3Z" fill="none" stroke="#000" stroke-width="1.1"/>
<path d="M996.0 963.7L969.3 973.2L968.9 955.1Z" fill="#000" stroke="#000" stroke-width="3.0" stroke-linejoin="round"/>
<path d="M996.0 963.7L969.3 973.2L968.9 955.1Z" fill="#f6821c" stroke="#f6821c" stroke-width=".6" stroke-linejoin="round"/>
<path d="M983.1 963.9L973.8 967.7L973.7 960.6Z" fill="none" stroke="#58c058" stroke-width="1.1"/>
<path d="M966 958 L993 955 L983 975 Z" fill="none" stroke="#58c058" stroke-width="1" />
<path d="M1056 937 L1049 950 L1061 952 L1068 968 L1052 968" fill="none" stroke="#58c058" stroke-width="1" />
<circle cx="834.3" cy="959.1" r="5.3" fill="#1414ff"/>
</svg>
<!--MAPSVG_END-->
</div>
<div id="vscroll"><div class="thumb" style="left:0;top:786px;width:16px;height:49px"></div><svg class="abs" style="left:0;top:0" width="16" height="868" viewBox="0 0 16 868"><path d="M4 11.500l3.500-3.500 3.500 3.500" fill="none" stroke="#5f5f5f" stroke-width="1.7"/><path d="M4 856.500l3.500 3.500 3.500-3.500" fill="none" stroke="#5f5f5f" stroke-width="1.7"/></svg></div>
<div id="hscroll"><svg class="abs" style="left:0;top:0" width="1368" height="17" viewBox="0 0 1368 17"><path d="M9.500 5l-3.500 3.500 3.500 3.500" fill="none" stroke="#5f5f5f" stroke-width="1.7"/><path d="M1356.500 5l3.500 3.500-3.500 3.500" fill="none" stroke="#5f5f5f" stroke-width="1.7"/></svg><div class="thumb" style="left:694px;top:0;width:96px;height:17px"></div></div>
<div id="corner"></div>
<div id="cmd"></div>
<div class="abs" style="left:1385px;top:143px;width:2px;height:882px;background:repeating-linear-gradient(to bottom,#c3c3c3 0 2px,transparent 2px 4px)"></div>
<div class="abs" style="left:1387px;top:141px;width:1px;height:884px;background:#cfcfe6"></div>
<div class="abs" style="left:1390px;top:143px;width:2px;height:882px;background:repeating-linear-gradient(to bottom,#c3c3c3 0 2px,transparent 2px 4px)"></div>
<div class="abs" style="left:1392px;top:145px;width:1336px;height:2px;background:repeating-linear-gradient(to right,#c3c3c3 0 2px,transparent 2px 4px)"></div>
<svg class="abs" style="left:1714px;top:1034px" width="13" height="13" viewBox="0 0 13 13"><path d="M10 1h2v2h-2zM10 5h2v2h-2zM6 5h2v2h-2zM10 9h2v2h-2zM6 9h2v2h-2zM2 9h2v2h-2z" fill="#bfbfbf"/></svg>
<div id="cmdtitle">Kommando</div>
<div id="cmdbox"><pre>Attr("PTR_37d14a0"  -&gt;$sym.1.$pos.
$pointer)
  -&gt;PTR_37d1538
LoadArea "100"  "PTR_37d1538"  /RO
FORMAT/PV /SELECT
Pfad &lt;..\..\ApplicationData\ALKIS\dbb
\VS_Bestand\&gt;
Value ReturnValue Attr(s_copy(Value
(arg1) 3) -&gt;$sym.1.$pos.
$ptrEqual.typstringkey5820key5822.$up.
$up..COU)
  Value(arg1)
Value(arg1)
  -&gt;ID/PTR_37d14a0
Value ReturnValue Attr(s_copy
("ID/PTR_37d14a0"  3) -&gt;$sym.1.$pos.
$ptrEqual.typstringkey5820key5822.$up.
$up..COU)
  s_copy("ID/PTR_37d14a0"  3)
s_copy("ID/PTR_37d14a0"  3)
  -&gt;PTR_37d14a0
Value ReturnValue Attr("PTR_37d14a0"
-&gt;$sym.1.$pos.
$ptrEqual.typstringkey5820key5822.$up.
$up..COU)
  Attr("PTR_37d14a0"  -&gt;$sym.1.$pos.
$ptrEqual.typstringkey5820key5822.$up.
$up..COU)
Attr("PTR_37d14a0"  -&gt;$sym.1.$pos.
$ptrEqual.typstringkey5820key5822.$up.
$up..COU)
  -&gt;264
Value ReturnValue "264"
Attr s_copy(Value(arg1) 3) -&gt;.COU
Value(ReturnValue)
  Value(arg1)
Value(arg1)
  -&gt;ID/PTR_37d14a0
Attr s_copy("ID/PTR_37d14a0"  3) -&gt;.COU
Value(ReturnValue)
  s_copy("ID/PTR_37d14a0"  3)
s_copy("ID/PTR_37d14a0"  3)
  -&gt;PTR_37d14a0
Attr "PTR_37d14a0"  -&gt;.COU Value
(ReturnValue)
  Value(ReturnValue)
Value(ReturnValue)
  -&gt;264
Attr "PTR_37d14a0"  -&gt;.COU "264"
EndProcedure
s.io_ChangeMenueItem 6 -2 6 Ok
s.RefreshDBplans "EXEC/AuskunftWorkproc
RESELECT"
Befehl eingeben:</pre></div>
<div id="cmdscroll"><div class="thumb" style="left:1px;top:761px;width:14px;height:44px"></div><svg class="abs" style="left:0;top:0" width="15" height="822" viewBox="0 0 15 822"><path d="M4 11.500l3.500-3.500 3.500 3.500" fill="none" stroke="#5f5f5f" stroke-width="1.7"/><path d="M4 810.500l3.500 3.500 3.500-3.500" fill="none" stroke="#5f5f5f" stroke-width="1.7"/></svg></div>
<div id="cmdin"></div>
<div id="status">
<span style="left:1.6px;letter-spacing:-0.67px">Plan H0-INTERGEOVS</span>
<span style="left:134.1px;letter-spacing:-0.71px">1:255</span>
<span style="left:208.5px;letter-spacing:-0.40px">80.5 m</span>
<span style="left:323.7px;letter-spacing:-0.98px">3.6G</span>
<span style="left:356.8px;letter-spacing:-0.36px">Bereit</span>
<span style="left:406.9px;letter-spacing:-0.42px">Ok</span>
<span style="left:436.8px;letter-spacing:-0.56px">Pos: (3484733.49,5470263.80)</span>
<span style="left:617.0px;letter-spacing:-0.16px">Befehl eingeben:</span>
<i style="left:129px"></i><i style="left:204px"></i><i style="left:304px"></i><i style="left:319px"></i><i style="left:353px"></i><i style="left:403px"></i><i style="left:432px"></i><i style="left:612px"></i><i style="left:862px"></i><i style="left:1112px"></i>
</div>
<div id="dlg">
<div class="tb"></div>
<div class="tt" style="letter-spacing:-0.03px">Selektieren nach Attribut (wert)</div>
<svg class="abs" style="left:440px;top:2px" width="70" height="20" viewBox="0 0 70 20"><text x="3" y="14" font-family="Liberation Sans,sans-serif" font-size="13" fill="#999">?</text><path d="M46.5 4.5l10 10M56.5 4.5l-10 10" stroke="#999" stroke-width="1" fill="none"/></svg>
<div class="l" style="left:9px;top:33px;letter-spacing:-0.01px">Attributname</div>
<div class="l" style="left:234px;top:33px;width:55px;overflow:hidden;letter-spacing:0.11px">Attributwert</div>
<div class="cb" style="left:356px;top:32px"></div><div class="l" style="left:372px;top:33px;letter-spacing:-0.51px">Alle</div>
<div class="in" style="left:11px;top:54px;width:204px"><span style="letter-spacing:-0.72px">.COU</span></div>
<div class="in" style="left:231px;top:54px;width:186px"><span style="letter-spacing:0.05px">(?)(272|264)</span></div>
<div class="lb" style="left:11px;top:76px;width:204px;height:120px"><div style="top:1px">.COR</div><div style="top:14px">.CORT</div><div style="top:27px">.COT</div><div style="left:1px;top:40px;width:183px;background:#0078d7;color:#fff;padding-left:2px;letter-spacing:-0.72px">.COU</div><div style="top:53px">.COV</div><div style="top:66px">.COW</div><div style="top:79px">.pnr</div><div style="top:92px">.pwrE</div><div style="top:105px">.pwrV</div><svg class="abs" style="left:185px;top:1px" width="17" height="118" viewBox="0 0 17 118"><rect width="17" height="118" fill="#f0f0f0"/><rect x="1" y="27" width="15" height="17" fill="#cdcdcd"/><path d="M5 10.5l3.5-3.5 3.5 3.5M5 107.5l3.5 3.5 3.5-3.5" stroke="#606060" stroke-width="1.6" fill="none"/></svg></div>
<div class="lb" style="left:231px;top:76px;width:186px;height:120px"><div style="top:1px">257</div><div style="top:14px">258</div><div style="top:27px">260</div><div style="top:40px">261</div><div style="top:53px">262</div><div style="top:66px">263</div><div style="top:79px">264</div><div style="top:92px">272</div><div style="top:105px">310</div></div>
<div class="grp" style="left:420px;top:52px;width:85px;height:144px"></div>
<div class="l" style="left:426px;top:46px;background:#f0f0f0;padding:0 2px;letter-spacing:-0.18px">Selektieren</div>
<div class="btn" style="left:432px;top:67px;width:63px;height:21px;letter-spacing:-0.07px">Zufügen</div>
<div class="btn" style="left:432px;top:98px;width:63px;height:21px;letter-spacing:0.01px">Entfernen</div>
<div class="btn" style="left:432px;top:128px;width:63px;height:21px;letter-spacing:-0.08px">Schnitt</div>
<div class="btn" style="left:432px;top:163px;width:63px;height:21px;letter-spacing:-0.40px">Neu</div>
<div class="cb" style="left:6px;top:202px"><svg width="11" height="11" viewBox="0 0 11 11"><path d="M1.5 5.5l3 3 5-6.5" stroke="#222" stroke-width="1.3" fill="none"/></svg></div><div class="l" style="left:22px;top:203px;letter-spacing:-0.16px">Selektionsunabhängig auflisten</div>
<div class="cb" style="left:186px;top:202px"><svg width="11" height="11" viewBox="0 0 11 11"><path d="M1.5 5.5l3 3 5-6.5" stroke="#222" stroke-width="1.3" fill="none"/></svg></div><div class="l" style="left:202px;top:203px;letter-spacing:-0.22px">Kurznamen selektieren</div>
<div class="cb" style="left:342px;top:202px"></div><div class="l" style="left:358px;top:203px;letter-spacing:-0.06px">zoom auf selektiertes Objekt</div>
<div class="btn" style="left:7px;top:228px;width:78px;height:21px;letter-spacing:-0.20px">Selektiere Alles</div>
<div class="l" style="left:147px;top:228px;letter-spacing:-0.04px">selektierte Objekte</div>
<div class="lb" style="left:246px;top:227px;width:80px;height:20px;background:#f0f0f0;border-color:#7a7a7a #c8c8c8 #c8c8c8 #7a7a7a"><div style="left:5px;top:3px;letter-spacing:-0.47px">17</div></div>
<div class="btn" style="left:427px;top:223px;width:78px;height:21px;letter-spacing:-0.36px">Schließen</div>
</div>

<div id="frame"></div>
</body>
</html>
